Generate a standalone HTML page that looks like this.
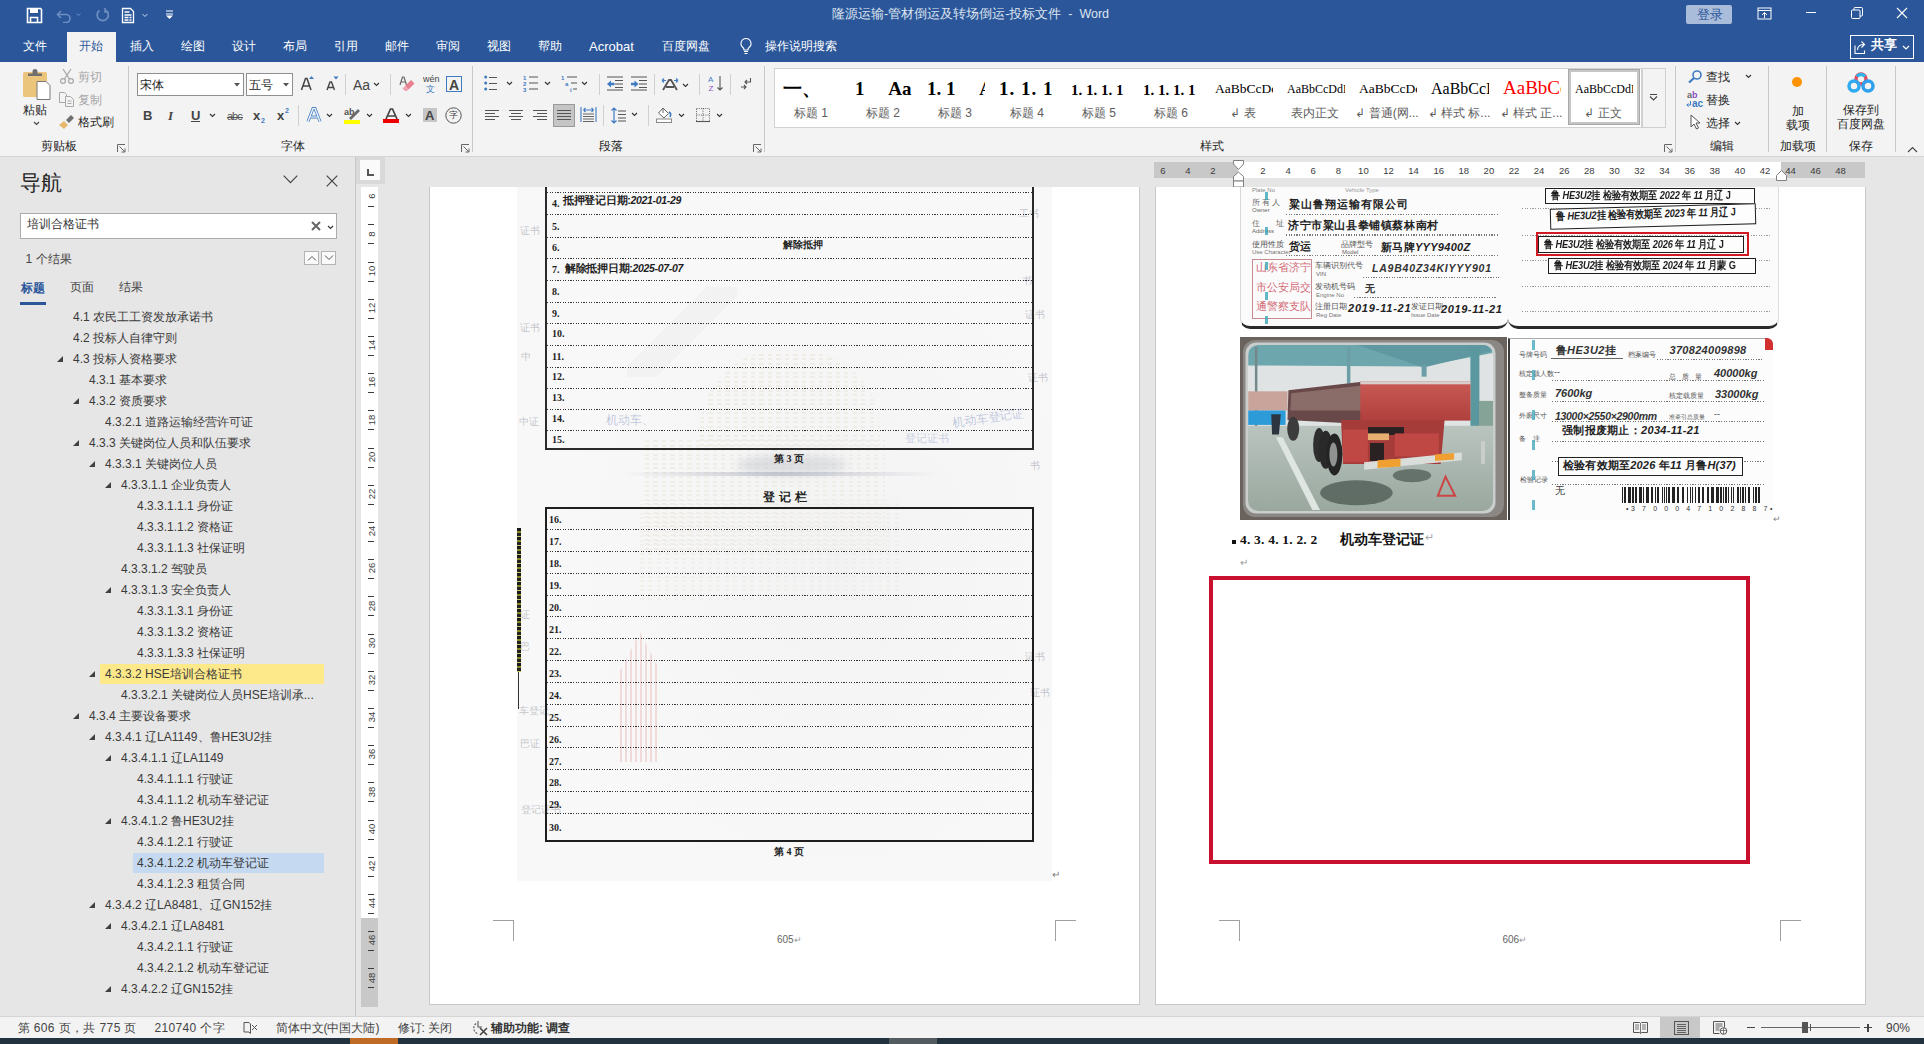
<!DOCTYPE html>
<html><head><meta charset="utf-8">
<style>
*{margin:0;padding:0;box-sizing:border-box}
html,body{width:1924px;height:1044px;overflow:hidden;background:#e6e6e6;font-family:"Liberation Sans",sans-serif;color:#262626}
.a{position:absolute}
#title{position:absolute;left:0;top:0;width:1924px;height:62px;background:#2b579a}
#ribbon{position:absolute;left:0;top:62px;width:1924px;height:95px;background:#f3f3f3;border-bottom:1px solid #d5d5d5}
#nav{position:absolute;left:0;top:157px;width:356px;height:859px;background:#e6e6e6;border-right:1px solid #c6c6c6}
#doc{position:absolute;left:356px;top:157px;width:1568px;height:859px;background:#e6e6e6}
#status{position:absolute;left:0;top:1016px;width:1924px;height:22px;background:#f3f3f3;border-top:1px solid #d4d4d4}
#task{position:absolute;left:0;top:1038px;width:1924px;height:6px;background:#22333f}
.page{position:absolute;background:#fff;border:1px solid #c8c8c8}
.t{position:absolute;white-space:nowrap;line-height:1}
</style></head><body>
<div id="title">
<svg class="a" style="left:26px;top:7px" width="17" height="17" viewBox="0 0 17 17"><path d="M1.5 1.5h13l1 1v13h-14z" fill="none" stroke="#fff" stroke-width="1.6"/><rect x="4" y="2" width="8" height="4" fill="#fff"/><path d="M4.5 15.5v-5h7v5" fill="none" stroke="#fff" stroke-width="1.6"/></svg>
<svg class="a" style="left:56px;top:8px" width="30" height="15" viewBox="0 0 30 15"><path d="M2 6.5h8a4 4 0 0 1 0 8H7" fill="none" stroke="#6c8ec2" stroke-width="1.6"/><path d="M5 3L1.5 6.5 5 10" fill="none" stroke="#6c8ec2" stroke-width="1.6"/><path d="M20.5 5.5l2 2 2-2" fill="none" stroke="#6c8ec2" stroke-width="1"/></svg>
<svg class="a" style="left:95px;top:7px" width="16" height="16" viewBox="0 0 16 16"><path d="M10.5 3.2A5.6 5.6 0 1 1 4.5 3.5" fill="none" stroke="#6c8ec2" stroke-width="1.7"/><path d="M10 1v4h3.6" fill="none" stroke="#6c8ec2" stroke-width="1.6"/></svg>
<svg class="a" style="left:121px;top:7px" width="32" height="17" viewBox="0 0 32 17"><path d="M1.5 1.5h8l3 3v11h-11z" fill="none" stroke="#fff" stroke-width="1.3"/><path d="M3.5 5h5M3.5 8h7M3.5 10.5h4M8.5 10.5h2M3.5 13h4M8.5 13h2" stroke="#fff" stroke-width="1.3"/><path d="M21.5 7l2.5 2.5 2.5-2.5" fill="none" stroke="#c9d6ea" stroke-width="1"/></svg>
<svg class="a" style="left:165px;top:10px" width="9" height="10" viewBox="0 0 9 10"><path d="M1 1h7M1 4h7" stroke="#fff" stroke-width="1.2"/><path d="M1 5.5h7L4.5 9z" fill="#fff"/></svg>
<div class="t" style="left:832px;top:7.5px;font-size:12.5px;color:#dde4ef">隆源运输-管材倒运及转场倒运-投标文件&nbsp;&nbsp;-&nbsp;&nbsp;Word</div>
<div class="a" style="left:1686px;top:5px;width:46px;height:19px;background:#a9bcda;border-radius:2px"></div>
<div class="t" style="left:1697px;top:8px;font-size:13px;color:#2b579a">登录</div>
<svg class="a" style="left:1757px;top:7px" width="15" height="13" viewBox="0 0 15 13"><rect x="1" y="1" width="13" height="11" fill="none" stroke="#fff" stroke-width="1"/><path d="M1 3.5h13" stroke="#fff"/><path d="M7.5 11V5.5M5 8l2.5-2.5L10 8" fill="none" stroke="#fff"/></svg>
<div class="a" style="left:1806px;top:12px;width:10px;height:1px;background:#fff"></div>
<svg class="a" style="left:1851px;top:7px" width="12" height="12" viewBox="0 0 12 12"><rect x="0.5" y="3" width="8.5" height="8.5" rx="1" fill="none" stroke="#fff"/><path d="M3 3V1.5a1 1 0 0 1 1-1h6.5a1 1 0 0 1 1 1V8a1 1 0 0 1-1 1H9" fill="none" stroke="#fff"/></svg>
<svg class="a" style="left:1896px;top:7px" width="12" height="12" viewBox="0 0 12 12"><path d="M1 1l10 10M11 1L1 11" stroke="#fff" stroke-width="1.1"/></svg>
<div class="a" style="left:67px;top:32px;width:49px;height:30px;background:#f3f3f3"></div>
<div class="t" style="left:23px;top:40px;font-size:12px;color:#fff">文件</div>
<div class="t" style="left:79px;top:40px;font-size:12px;color:#2b579a">开始</div>
<div class="t" style="left:130px;top:40px;font-size:12px;color:#fff">插入</div>
<div class="t" style="left:181px;top:40px;font-size:12px;color:#fff">绘图</div>
<div class="t" style="left:232px;top:40px;font-size:12px;color:#fff">设计</div>
<div class="t" style="left:283px;top:40px;font-size:12px;color:#fff">布局</div>
<div class="t" style="left:334px;top:40px;font-size:12px;color:#fff">引用</div>
<div class="t" style="left:385px;top:40px;font-size:12px;color:#fff">邮件</div>
<div class="t" style="left:436px;top:40px;font-size:12px;color:#fff">审阅</div>
<div class="t" style="left:487px;top:40px;font-size:12px;color:#fff">视图</div>
<div class="t" style="left:538px;top:40px;font-size:12px;color:#fff">帮助</div>
<div class="t" style="left:589px;top:40px;font-size:13px;color:#fff">Acrobat</div>
<div class="t" style="left:662px;top:40px;font-size:12px;color:#fff">百度网盘</div>
<svg class="a" style="left:739px;top:37px" width="14" height="18" viewBox="0 0 14 18"><path d="M7 1.5a5 5 0 0 0-3 9c.8.7 1 1.3 1 2.5h4c0-1.2.2-1.8 1-2.5a5 5 0 0 0-3-9z" fill="none" stroke="#fff" stroke-width="1.1"/><path d="M5 14.5h4M5.5 16.5h3" stroke="#fff" stroke-width="1.1"/></svg>
<div class="t" style="left:765px;top:40px;font-size:12px;color:#fff">操作说明搜索</div>
<div class="a" style="left:1850px;top:35px;width:64px;height:24px;border:1px solid #fff"></div>
<svg class="a" style="left:1854px;top:40px" width="14" height="14" viewBox="0 0 14 14"><path d="M1 5.5v8h9.5v-3" fill="none" stroke="#fff" stroke-width="1.1"/><path d="M3.5 10c0-4 3-5.5 6.5-5.5M7.5 1.5l3 3-3 3" fill="none" stroke="#fff" stroke-width="1.1"/></svg>
<div class="t" style="left:1871px;top:38px;font-size:13px;color:#fff;font-weight:bold">共享</div>
<svg class="a" style="left:1902px;top:45px" width="8" height="6" viewBox="0 0 8 6"><path d="M1 1l3 3 3-3" fill="none" stroke="#fff" stroke-width="1.2"/></svg>
</div>
<div id="ribbon">
<!-- clipboard -->
<svg class="a" style="left:22px;top:7px" width="30" height="32" viewBox="0 0 30 32"><rect x="1" y="3" width="24" height="25" rx="1.5" fill="#ebc57b"/><path d="M6 7h14V4.5h-4.5V2.5a2.5 2.5 0 0 0-5 0v2H6z" fill="#6f6f6f"/><path d="M15 12.5h9l4 4v14h-13z" fill="#fff" stroke="#7a7a7a" stroke-width="1"/></svg>
<div class="t" style="left:23px;top:42px;font-size:12px;color:#262626">粘贴</div>
<svg class="a" style="left:33px;top:59px" width="7" height="5" viewBox="0 0 7 5"><path d="M1 1l2.5 2.5L6 1" fill="none" stroke="#444" stroke-width="1.1"/></svg>
<svg class="a" style="left:59px;top:6px" width="16" height="16" viewBox="0 0 16 16"><path d="M4 1l6.5 10M12 1L5.5 11" stroke="#a8a8a8" stroke-width="1.3"/><circle cx="4" cy="13" r="2.4" fill="none" stroke="#a8a8a8" stroke-width="1.2"/><circle cx="12" cy="13" r="2.4" fill="none" stroke="#a8a8a8" stroke-width="1.2"/></svg>
<div class="t" style="left:78px;top:9px;font-size:12px;color:#a6a6a6">剪切</div>
<svg class="a" style="left:58px;top:29px" width="17" height="16" viewBox="0 0 17 16"><path d="M1.5 1.5h5l2 2v8h-7z" fill="none" stroke="#a8a8a8" stroke-width="1"/><path d="M7.5 5.5h5l3 3v7h-8z" fill="#f3f3f3" stroke="#a8a8a8" stroke-width="1"/><path d="M9.5 10h4M9.5 12.5h4" stroke="#a8a8a8"/></svg>
<div class="t" style="left:78px;top:32px;font-size:12px;color:#a6a6a6">复制</div>
<svg class="a" style="left:58px;top:52px" width="18" height="16" viewBox="0 0 18 16"><path d="M1 11l5-4 4 4-4 4z" fill="#e8b86a"/><path d="M8 6l5-5 3 3-5 5z" fill="#6f6f6f"/></svg>
<div class="t" style="left:78px;top:54px;font-size:12px;color:#262626">格式刷</div>
<div class="t" style="left:41px;top:78px;font-size:12px;color:#262626">剪贴板</div>
<svg class="a" style="left:117px;top:82px" width="9" height="9" viewBox="0 0 9 9"><path d="M.5 8V.5H8" fill="none" stroke="#666"/><path d="M2.5 2.5l5.5 5.5M8 4.5v3.5H4.5" fill="none" stroke="#666"/></svg>
<div class="a" style="left:128px;top:4px;width:1px;height:86px;background:#c8c8c8"></div>
<!-- font -->
<div class="a" style="left:137px;top:11px;width:107px;height:23px;background:#fff;border:1px solid #8f8f8f"></div>
<div class="t" style="left:140px;top:17px;font-size:12px;color:#222">宋体</div>
<svg class="a" style="left:234px;top:21px" width="6" height="4"><path d="M0 0h6L3 3.5z" fill="#555"/></svg>
<div class="a" style="left:246px;top:11px;width:47px;height:23px;background:#fff;border:1px solid #8f8f8f"></div>
<div class="t" style="left:249px;top:17px;font-size:12px;color:#222">五号</div>
<svg class="a" style="left:283px;top:21px" width="6" height="4"><path d="M0 0h6L3 3.5z" fill="#555"/></svg>
<svg class="a" style="left:300px;top:13px" width="16" height="16" viewBox="0 0 16 16"><path d="M1.5 15L5.5 3.5h1.5L11 15M3 11h7" fill="none" stroke="#444" stroke-width="1.5"/><path d="M9 4l2.5-3 2.5 3z" fill="#3f7bc1"/></svg>
<svg class="a" style="left:325px;top:13px" width="16" height="16" viewBox="0 0 16 16"><path d="M2 15L5 7h1.5L9.5 15M3.5 12.5h5" fill="none" stroke="#444" stroke-width="1.4"/><path d="M8.5 1.5h5L11 4.5z" fill="#3f7bc1"/></svg>
<div class="a" style="left:345px;top:12px;width:1px;height:21px;background:#d0d0d0"></div>
<div class="t" style="left:353px;top:16px;font-size:14px;color:#444">Aa</div>
<svg class="a" style="left:373px;top:20px" width="7" height="5" viewBox="0 0 7 5"><path d="M1 1l2.5 2.5L6 1" fill="none" stroke="#333" stroke-width="1.1"/></svg>
<div class="a" style="left:390px;top:12px;width:1px;height:21px;background:#d0d0d0"></div>
<svg class="a" style="left:399px;top:13px" width="16" height="17" viewBox="0 0 16 17"><path d="M1 10L3.5 2h1.5L7.5 10M2 7h4" fill="none" stroke="#666" stroke-width="1.2"/><path d="M6 11l6-6 3.5 3.5-6 6z" fill="#e8808f"/><path d="M3.5 13.5l2.5-2.5 3.5 3.5-1.5 1.5h-2z" fill="#f0a3ae"/></svg>
<div class="t" style="left:423px;top:13px;font-size:9px;color:#444">wén</div>
<div class="t" style="left:426px;top:23px;font-size:9px;color:#3f7bc1">文</div>
<div class="a" style="left:446px;top:14px;width:16px;height:16px;border:1.5px solid #3f7bc1"></div>
<div class="t" style="left:449px;top:16px;font-size:14px;color:#444;font-weight:bold">A</div>
<div class="t" style="left:143px;top:47px;font-size:13px;color:#444;font-weight:bold">B</div>
<div class="t" style="left:168px;top:47px;font-size:13px;color:#444;font-style:italic;font-weight:bold;font-family:'Liberation Serif',serif">I</div>
<div class="t" style="left:191px;top:47px;font-size:13px;color:#444;font-weight:bold">U</div>
<div class="a" style="left:191px;top:59px;width:9px;height:1px;background:#444"></div>
<svg class="a" style="left:209px;top:51px" width="7" height="5" viewBox="0 0 7 5"><path d="M1 1l2.5 2.5L6 1" fill="none" stroke="#333" stroke-width="1.1"/></svg>
<div class="t" style="left:227px;top:49px;font-size:11px;color:#555;letter-spacing:-1px">abc</div>
<div class="a" style="left:227px;top:55px;width:16px;height:1px;background:#555"></div>
<div class="t" style="left:253px;top:47px;font-size:13px;color:#444;font-weight:bold">x</div>
<div class="t" style="left:261px;top:55px;font-size:7px;color:#3f7bc1;font-weight:bold">2</div>
<div class="t" style="left:277px;top:47px;font-size:13px;color:#444;font-weight:bold">x</div>
<div class="t" style="left:285px;top:45px;font-size:7px;color:#3f7bc1;font-weight:bold">2</div>
<div class="a" style="left:298px;top:43px;width:1px;height:21px;background:#d0d0d0"></div>
<svg class="a" style="left:306px;top:45px" width="16" height="16" viewBox="0 0 16 16"><path d="M2 14.5L7 1.5h2L14 14.5M4.5 10h7" fill="none" stroke="#4f86c6" stroke-width="3"/><path d="M2 14.5L7 1.5h2L14 14.5M4.5 10h7" fill="none" stroke="#fff" stroke-width="1.2"/></svg>
<svg class="a" style="left:326px;top:51px" width="7" height="5" viewBox="0 0 7 5"><path d="M1 1l2.5 2.5L6 1" fill="none" stroke="#333" stroke-width="1.1"/></svg>
<svg class="a" style="left:344px;top:44px" width="17" height="18" viewBox="0 0 17 18"><text x="0" y="9" font-size="9" font-family="Liberation Sans" font-weight="bold" fill="#555">ab</text><path d="M5 12l9-9 2 2-9 9z" fill="#6a6a6a"/><rect x="0" y="14" width="16" height="4" fill="#ffff00"/></svg>
<svg class="a" style="left:366px;top:51px" width="7" height="5" viewBox="0 0 7 5"><path d="M1 1l2.5 2.5L6 1" fill="none" stroke="#333" stroke-width="1.1"/></svg>
<svg class="a" style="left:383px;top:46px" width="17" height="15" viewBox="0 0 17 15"><path d="M3 11L7.5 1h2L14 11M5 8h7" fill="none" stroke="#444" stroke-width="1.7"/><rect x="0" y="11" width="16" height="4" fill="#e00"/></svg>
<svg class="a" style="left:405px;top:51px" width="7" height="5" viewBox="0 0 7 5"><path d="M1 1l2.5 2.5L6 1" fill="none" stroke="#333" stroke-width="1.1"/></svg>
<div class="a" style="left:423px;top:46px;width:14px;height:14px;background:#c6c6c6"></div>
<div class="t" style="left:425px;top:47px;font-size:13px;color:#444;font-weight:bold">A</div>
<svg class="a" style="left:445px;top:45px" width="17" height="17" viewBox="0 0 17 17"><circle cx="8.5" cy="8.5" r="7.7" fill="none" stroke="#555" stroke-width="1"/></svg>
<div class="t" style="left:449px;top:49px;font-size:9px;color:#444">字</div>
<div class="t" style="left:281px;top:78px;font-size:12px;color:#262626">字体</div>
<svg class="a" style="left:461px;top:82px" width="9" height="9" viewBox="0 0 9 9"><path d="M.5 8V.5H8" fill="none" stroke="#666"/><path d="M2.5 2.5l5.5 5.5M8 4.5v3.5H4.5" fill="none" stroke="#666"/></svg>
<div class="a" style="left:472px;top:4px;width:1px;height:86px;background:#c8c8c8"></div>
<!-- paragraph -->
<svg class="a" style="left:484px;top:13px" width="30" height="16" viewBox="0 0 30 16"><circle cx="1.7" cy="2" r="1.5" fill="#3f7bc1"/><circle cx="1.7" cy="8" r="1.5" fill="#3f7bc1"/><circle cx="1.7" cy="14" r="1.5" fill="#3f7bc1"/><path d="M5 2.5h8M5 8.5h8M5 14.5h8" stroke="#555" stroke-width="1"/><path d="M23 7l2.5 2.5L28 7" fill="none" stroke="#333" stroke-width="1.1"/></svg>
<svg class="a" style="left:523px;top:13px" width="30" height="18" viewBox="0 0 30 18"><text x="0" y="5" font-size="6" font-weight="bold" font-family="Liberation Sans" fill="#3f7bc1">1</text><text x="0" y="11" font-size="6" font-weight="bold" font-family="Liberation Sans" fill="#3f7bc1">2</text><text x="0" y="17" font-size="6" font-weight="bold" font-family="Liberation Sans" fill="#3f7bc1">3</text><path d="M6 2h9M6 8h9M6 14h9" stroke="#555" stroke-width="1.1"/><path d="M22 7l2.5 2.5L27 7" fill="none" stroke="#333" stroke-width="1.1"/></svg>
<svg class="a" style="left:561px;top:13px" width="30" height="18" viewBox="0 0 30 18"><text x="0" y="5" font-size="6" font-weight="bold" font-family="Liberation Sans" fill="#3f7bc1">1</text><text x="4" y="11" font-size="6" font-weight="bold" font-family="Liberation Sans" fill="#3f7bc1">a</text><text x="9" y="17" font-size="6" font-weight="bold" font-family="Liberation Sans" fill="#3f7bc1">i</text><path d="M6 2h10M10 8h6M12 14h4" stroke="#555" stroke-width="1.1"/><path d="M21 7l2.5 2.5L26 7" fill="none" stroke="#333" stroke-width="1.1"/></svg>
<div class="a" style="left:599px;top:12px;width:1px;height:21px;background:#d0d0d0"></div>
<svg class="a" style="left:607px;top:14px" width="17" height="15" viewBox="0 0 17 15"><path d="M0 1h16M8 4.5h8M8 8h8M8 11.5h8M0 14h16" stroke="#555" stroke-width="1.1"/><path d="M0 8l4-3.5v2.3h3.5v2.4H4v2.3z" fill="#3f7bc1"/></svg>
<svg class="a" style="left:631px;top:14px" width="17" height="15" viewBox="0 0 17 15"><path d="M0 1h16M8 4.5h8M8 8h8M8 11.5h8M0 14h16" stroke="#555" stroke-width="1.1"/><path d="M7.5 8L3.5 4.5v2.3H0v2.4h3.5v2.3z" fill="#3f7bc1"/></svg>
<div class="a" style="left:654px;top:12px;width:1px;height:21px;background:#d0d0d0"></div>
<svg class="a" style="left:661px;top:15px" width="30" height="14" viewBox="0 0 30 14"><path d="M2 13l6-10h2l6 10M5 10h8" fill="none" stroke="#555" stroke-width="1.8"/><path d="M1 3.5h4M1 3.5l2-2M1 3.5l2 2M13 3.5h4M17 3.5l-2-2M17 3.5l-2 2" fill="none" stroke="#3f7bc1" stroke-width="1.1"/><path d="M22 7l2.5 2.5L27 7" fill="none" stroke="#333" stroke-width="1.1"/></svg>
<div class="a" style="left:699px;top:12px;width:1px;height:21px;background:#d0d0d0"></div>
<svg class="a" style="left:708px;top:13px" width="16" height="17" viewBox="0 0 16 17"><text x="0" y="7" font-size="8" font-family="Liberation Sans" fill="#3f7bc1">A</text><text x="0.5" y="16" font-size="8" font-family="Liberation Sans" fill="#8d4fbf">Z</text><path d="M12 1v14M9.5 12.5L12 15l2.5-2.5" fill="none" stroke="#555" stroke-width="1.1"/></svg>
<div class="a" style="left:730px;top:12px;width:1px;height:21px;background:#d0d0d0"></div>
<svg class="a" style="left:740px;top:15px" width="13" height="13" viewBox="0 0 13 13"><path d="M10.5 1v4H5M7 3L5 5l2 2M1 10h5M4 8l2 2-2 2" fill="none" stroke="#555" stroke-width="1.1"/></svg>
<svg class="a" style="left:485px;top:48px" width="15" height="12" viewBox="0 0 15 12"><path d="M0 .5h14M0 3.5h10M0 6.5h14M0 9.5h10" stroke="#555" stroke-width="1"/></svg>
<svg class="a" style="left:509px;top:48px" width="15" height="12" viewBox="0 0 15 12"><path d="M0 .5h14M2 3.5h10M0 6.5h14M2 9.5h10" stroke="#555" stroke-width="1"/></svg>
<svg class="a" style="left:533px;top:48px" width="15" height="12" viewBox="0 0 15 12"><path d="M0 .5h14M4 3.5h10M0 6.5h14M4 9.5h10" stroke="#555" stroke-width="1"/></svg>
<div class="a" style="left:553px;top:42px;width:22px;height:23px;background:#c5c5c5;border:1px solid #9a9a9a"></div>
<svg class="a" style="left:557px;top:48px" width="15" height="12" viewBox="0 0 15 12"><path d="M0 .5h14M0 3.5h14M0 6.5h14M0 9.5h14" stroke="#555" stroke-width="1"/></svg>
<svg class="a" style="left:580px;top:45px" width="17" height="16" viewBox="0 0 17 16"><path d="M1 0v15M16 0v15" stroke="#3f7bc1" stroke-width="1.1"/><path d="M3.5 3h10M3.5 3l2-2M3.5 3l2 2M13.5 3l-2-2M13.5 3l-2 2" fill="none" stroke="#3f7bc1" stroke-width="1.1"/><path d="M3 7h11M3 9.5h11M3 12h11M3 14.5h11" stroke="#555" stroke-width=".9"/></svg>
<div class="a" style="left:603px;top:43px;width:1px;height:21px;background:#d0d0d0"></div>
<svg class="a" style="left:611px;top:45px" width="28" height="17" viewBox="0 0 28 17"><path d="M3 1v15M.5 3.5L3 1l2.5 2.5M.5 13.5L3 16l2.5-2.5" fill="none" stroke="#3f7bc1" stroke-width="1.2"/><path d="M7 4h8M7 7.5h8M7 11h8M7 14h8" stroke="#555" stroke-width="1.1"/><path d="M21 6l2.5 2.5L26 6" fill="none" stroke="#333" stroke-width="1.1"/></svg>
<div class="a" style="left:648px;top:43px;width:1px;height:21px;background:#d0d0d0"></div>
<svg class="a" style="left:656px;top:44px" width="30" height="18" viewBox="0 0 30 18"><path d="M7 2l5.5 5.5L8 12 2.5 7z" fill="#fff" stroke="#666" stroke-width="1"/><path d="M7 2V7" stroke="#666"/><path d="M13 6c2 1 2 3 1 5" fill="none" stroke="#3f7bc1" stroke-width="1.6"/><rect x="0.5" y="13" width="15" height="3.5" fill="#fff" stroke="#888"/><path d="M23 8l2.5 2.5L28 8" fill="none" stroke="#333" stroke-width="1.1"/></svg>
<svg class="a" style="left:696px;top:46px" width="30" height="15" viewBox="0 0 30 15"><path d="M.5 .5h13v13h-13zM7 .5v13M.5 7h13" fill="none" stroke="#666" stroke-width="1" stroke-dasharray="1 1.2"/><path d="M0 13.5h14" stroke="#555" stroke-width="1.1"/><path d="M21 6l2.5 2.5L26 6" fill="none" stroke="#333" stroke-width="1.1"/></svg>
<div class="t" style="left:599px;top:78px;font-size:12px;color:#262626">段落</div>
<svg class="a" style="left:753px;top:82px" width="9" height="9" viewBox="0 0 9 9"><path d="M.5 8V.5H8" fill="none" stroke="#666"/><path d="M2.5 2.5l5.5 5.5M8 4.5v3.5H4.5" fill="none" stroke="#666"/></svg>
<div class="a" style="left:764px;top:4px;width:1px;height:86px;background:#c8c8c8"></div>
<!-- styles -->
<div class="a" style="left:774px;top:6px;width:868px;height:60px;background:#fff;border:1px solid #d2d2d2"></div>
<div class="a" style="left:783px;top:0;width:58px;height:60px;overflow:hidden"><div class="t" style="left:0;font-family:'Liberation Serif',serif;font-size:19px;font-weight:bold;top:17px;color:#000">一、</div></div>
<div class="t" style="left:775px;top:45px;width:72px;text-align:center;font-size:12px;color:#5c5c5c">标题 1</div>
<div class="a" style="left:855px;top:0;width:58px;height:60px;overflow:hidden"><div class="t" style="left:0;font-family:'Liberation Serif',serif;font-size:19px;font-weight:bold;top:17px;color:#000">1&nbsp;&nbsp;&nbsp;&nbsp;&nbsp;Aa</div></div>
<div class="t" style="left:847px;top:45px;width:72px;text-align:center;font-size:12px;color:#5c5c5c">标题 2</div>
<div class="a" style="left:927px;top:0;width:58px;height:60px;overflow:hidden"><div class="t" style="left:0;font-family:'Liberation Serif',serif;font-size:19px;font-weight:bold;top:17px;color:#000">1.&nbsp;1&nbsp;&nbsp;&nbsp;&nbsp;&nbsp;A</div></div>
<div class="t" style="left:919px;top:45px;width:72px;text-align:center;font-size:12px;color:#5c5c5c">标题 3</div>
<div class="a" style="left:999px;top:0;width:58px;height:60px;overflow:hidden"><div class="t" style="left:0;font-family:'Liberation Serif',serif;font-size:19px;font-weight:bold;top:17px;letter-spacing:1px;color:#000">1.&nbsp;1.&nbsp;1</div></div>
<div class="t" style="left:991px;top:45px;width:72px;text-align:center;font-size:12px;color:#5c5c5c">标题 4</div>
<div class="a" style="left:1071px;top:0;width:58px;height:60px;overflow:hidden"><div class="t" style="left:0;font-family:'Liberation Serif',serif;font-size:15px;font-weight:bold;top:21px;color:#000">1.&nbsp;1.&nbsp;1.&nbsp;1</div></div>
<div class="t" style="left:1063px;top:45px;width:72px;text-align:center;font-size:12px;color:#5c5c5c">标题 5</div>
<div class="a" style="left:1143px;top:0;width:58px;height:60px;overflow:hidden"><div class="t" style="left:0;font-family:'Liberation Serif',serif;font-size:15px;font-weight:bold;top:21px;color:#000">1.&nbsp;1.&nbsp;1.&nbsp;1</div></div>
<div class="t" style="left:1135px;top:45px;width:72px;text-align:center;font-size:12px;color:#5c5c5c">标题 6</div>
<div class="a" style="left:1215px;top:0;width:58px;height:60px;overflow:hidden"><div class="t" style="left:0;font-family:'Liberation Serif',serif;font-size:13.5px;top:20px;color:#000">AaBbCcDdEe</div></div>
<div class="t" style="left:1207px;top:45px;width:72px;text-align:center;font-size:12px;color:#5c5c5c">↲ 表</div>
<div class="a" style="left:1287px;top:0;width:58px;height:60px;overflow:hidden"><div class="t" style="left:0;font-family:'Liberation Serif',serif;font-size:12px;top:21px;color:#000">AaBbCcDdEe</div></div>
<div class="t" style="left:1279px;top:45px;width:72px;text-align:center;font-size:12px;color:#5c5c5c">表内正文</div>
<div class="a" style="left:1359px;top:0;width:58px;height:60px;overflow:hidden"><div class="t" style="left:0;font-family:'Liberation Serif',serif;font-size:13.5px;top:20px;color:#000">AaBbCcDdEe</div></div>
<div class="t" style="left:1351px;top:45px;width:72px;text-align:center;font-size:12px;color:#5c5c5c">↲ 普通(网...</div>
<div class="a" style="left:1431px;top:0;width:58px;height:60px;overflow:hidden"><div class="t" style="left:0;font-family:'Liberation Serif',serif;font-size:16px;top:19px;color:#000">AaBbCcI</div></div>
<div class="t" style="left:1423px;top:45px;width:72px;text-align:center;font-size:12px;color:#5c5c5c">↲ 样式 标...</div>
<div class="a" style="left:1503px;top:0;width:58px;height:60px;overflow:hidden"><div class="t" style="left:0;font-family:'Liberation Serif',serif;font-size:19px;top:16px;color:#f00;color:#f00">AaBbCc</div></div>
<div class="t" style="left:1495px;top:45px;width:72px;text-align:center;font-size:12px;color:#5c5c5c">↲ 样式 正...</div>
<div class="a" style="left:1568px;top:7px;width:72px;height:56px;border:3px solid #c6c6c6;outline:1px solid #a9a9a9;outline-offset:-1px"></div>
<div class="a" style="left:1575px;top:0;width:58px;height:60px;overflow:hidden"><div class="t" style="left:0;font-family:'Liberation Serif',serif;font-size:12px;top:21px;color:#000">AaBbCcDdEe</div></div>
<div class="t" style="left:1567px;top:45px;width:72px;text-align:center;font-size:12px;color:#5c5c5c">↲ 正文</div>
<div class="a" style="left:1642px;top:6px;width:24px;height:60px;background:#f3f3f3;border:1px solid #cfcfcf"></div>
<svg class="a" style="left:1649px;top:32px" width="9" height="7" viewBox="0 0 9 7"><path d="M1 .5h7" stroke="#444"/><path d="M1 2.5l3.5 3.5L8 2.5" fill="none" stroke="#444" stroke-width="1.1"/></svg>
<div class="t" style="left:1200px;top:78px;font-size:12px;color:#262626">样式</div>
<svg class="a" style="left:1664px;top:82px" width="9" height="9" viewBox="0 0 9 9"><path d="M.5 8V.5H8" fill="none" stroke="#666"/><path d="M2.5 2.5l5.5 5.5M8 4.5v3.5H4.5" fill="none" stroke="#666"/></svg>
<div class="a" style="left:1675px;top:4px;width:1px;height:86px;background:#c8c8c8"></div>
<svg class="a" style="left:1688px;top:8px" width="14" height="13" viewBox="0 0 14 13"><circle cx="9" cy="5" r="4" fill="none" stroke="#3f7bc1" stroke-width="1.6"/><path d="M6 8l-5 4.5" stroke="#3f7bc1" stroke-width="2.2"/></svg>
<div class="t" style="left:1706px;top:9px;font-size:12px;color:#262626">查找</div>
<svg class="a" style="left:1745px;top:12px" width="7" height="5" viewBox="0 0 7 5"><path d="M1 1l2.5 2.5L6 1" fill="none" stroke="#333" stroke-width="1.1"/></svg>
<div class="t" style="left:1687px;top:29px;font-size:9px;color:#666;font-weight:bold">a<span style="color:#8d4fbf">b</span></div>
<div class="t" style="left:1692px;top:37px;font-size:10px;color:#3f7bc1;font-weight:bold">ac</div>
<svg class="a" style="left:1686px;top:39px" width="6" height="7" viewBox="0 0 6 7"><path d="M4.5 0v4H1M2.5 2.5L.8 4l1.7 1.5" fill="none" stroke="#3f7bc1" stroke-width="1"/></svg>
<div class="t" style="left:1706px;top:32px;font-size:12px;color:#262626">替换</div>
<svg class="a" style="left:1690px;top:52px" width="11" height="16" viewBox="0 0 11 16"><path d="M1 1v12l3-3 2.5 5 2-1-2.5-5H10z" fill="#fff" stroke="#555" stroke-width="1"/></svg>
<div class="t" style="left:1706px;top:55px;font-size:12px;color:#262626">选择</div>
<svg class="a" style="left:1734px;top:59px" width="7" height="5" viewBox="0 0 7 5"><path d="M1 1l2.5 2.5L6 1" fill="none" stroke="#333" stroke-width="1.1"/></svg>
<div class="t" style="left:1710px;top:78px;font-size:12px;color:#262626">编辑</div>
<div class="a" style="left:1768px;top:4px;width:1px;height:86px;background:#c8c8c8"></div>
<div class="a" style="left:1792px;top:15px;width:10px;height:10px;border-radius:50%;background:#ff9200"></div>
<div class="t" style="left:1792px;top:43px;font-size:12px;color:#262626">加</div>
<div class="t" style="left:1786px;top:57px;font-size:12px;color:#262626">载项</div>
<div class="t" style="left:1780px;top:78px;font-size:12px;color:#262626">加载项</div>
<div class="a" style="left:1826px;top:4px;width:1px;height:86px;background:#c8c8c8"></div>
<svg class="a" style="left:1847px;top:10px" width="28" height="22" viewBox="0 0 28 22"><circle cx="14" cy="7" r="5" fill="none" stroke="#e8485b" stroke-width="3.5"/><path d="M10 4.5A5 5 0 0 1 18 4.5" fill="none" stroke="#2fb5ee" stroke-width="3.5"/><circle cx="7" cy="14" r="5" fill="none" stroke="#2fa9f0" stroke-width="3.5"/><circle cx="21" cy="14" r="5" fill="none" stroke="#2fa0ee" stroke-width="3.5"/></svg>
<div class="t" style="left:1843px;top:42px;font-size:12px;color:#262626">保存到</div>
<div class="t" style="left:1837px;top:56px;font-size:12px;color:#262626">百度网盘</div>
<div class="t" style="left:1849px;top:78px;font-size:12px;color:#262626">保存</div>
<div class="a" style="left:1895px;top:4px;width:1px;height:86px;background:#c8c8c8"></div>
<svg class="a" style="left:1907px;top:84px" width="11" height="7" viewBox="0 0 11 7"><path d="M1 6l4.5-4.5L10 6" fill="none" stroke="#444" stroke-width="1.1"/></svg>
</div>

<div id="nav">
<div class="t" style="left:20px;top:16px;font-size:20.5px;color:#262626">导航</div>
<svg class="a" style="left:283px;top:18px" width="15" height="9" viewBox="0 0 15 9"><path d="M.7 .7l6.8 7 6.8-7" fill="none" stroke="#444" stroke-width="1.2"/></svg>
<svg class="a" style="left:326px;top:18px" width="12" height="12" viewBox="0 0 12 12"><path d="M.7 .7l10.6 10.6M11.3 .7L.7 11.3" stroke="#444" stroke-width="1.2"/></svg>
<div class="a" style="left:20px;top:56px;width:317px;height:26px;background:#fff;border:1px solid #ababab"></div>
<div class="t" style="left:27px;top:61px;font-size:12px;color:#333">培训合格证书</div>
<svg class="a" style="left:311px;top:64px" width="10" height="10" viewBox="0 0 10 10"><path d="M1 1l8 8M9 1L1 9" stroke="#666" stroke-width="2"/></svg>
<svg class="a" style="left:327px;top:68px" width="7" height="5" viewBox="0 0 7 5"><path d="M1 1l2.5 2.5L6 1" fill="none" stroke="#333" stroke-width="1.1"/></svg>
<div class="t" style="left:25.5px;top:96px;font-size:12px;color:#444">1 个结果</div>
<div class="a" style="left:304px;top:94px;width:15px;height:14px;border:1px solid #b4b4b4;background:#fafafa"></div>
<div class="a" style="left:321px;top:94px;width:15px;height:14px;border:1px solid #b4b4b4;background:#fafafa"></div>
<svg class="a" style="left:307px;top:98px" width="10" height="6" viewBox="0 0 10 6"><path d="M1 5.5l4-4 4 4" fill="none" stroke="#555" stroke-width="1"/></svg>
<svg class="a" style="left:324px;top:98px" width="10" height="6" viewBox="0 0 10 6"><path d="M1 .5l4 4 4-4" fill="none" stroke="#555" stroke-width="1"/></svg>
<div class="t" style="left:21px;top:124.5px;font-size:12px;color:#2b579a;font-weight:bold">标题</div>
<div class="a" style="left:20px;top:145px;width:26px;height:3px;background:#2b579a"></div>
<div class="t" style="left:70px;top:124px;font-size:12px;color:#444">页面</div>
<div class="t" style="left:119px;top:124px;font-size:12px;color:#444">结果</div>
<div class="t" style="left:73px;top:154px;font-size:12px;color:#3a3a3a">4.1 农民工工资发放承诺书</div>
<div class="t" style="left:73px;top:175px;font-size:12px;color:#3a3a3a">4.2 投标人自律守则</div>
<svg class="a" style="left:57px;top:199px" width="6" height="6" viewBox="0 0 6 6"><path d="M6 0v6H0z" fill="#404040"/></svg>
<div class="t" style="left:73px;top:196px;font-size:12px;color:#3a3a3a">4.3 投标人资格要求</div>
<div class="t" style="left:89px;top:217px;font-size:12px;color:#3a3a3a">4.3.1 基本要求</div>
<svg class="a" style="left:73px;top:241px" width="6" height="6" viewBox="0 0 6 6"><path d="M6 0v6H0z" fill="#404040"/></svg>
<div class="t" style="left:89px;top:238px;font-size:12px;color:#3a3a3a">4.3.2 资质要求</div>
<div class="t" style="left:105px;top:259px;font-size:12px;color:#3a3a3a">4.3.2.1 道路运输经营许可证</div>
<svg class="a" style="left:73px;top:283px" width="6" height="6" viewBox="0 0 6 6"><path d="M6 0v6H0z" fill="#404040"/></svg>
<div class="t" style="left:89px;top:280px;font-size:12px;color:#3a3a3a">4.3.3 关键岗位人员和队伍要求</div>
<svg class="a" style="left:89px;top:304px" width="6" height="6" viewBox="0 0 6 6"><path d="M6 0v6H0z" fill="#404040"/></svg>
<div class="t" style="left:105px;top:301px;font-size:12px;color:#3a3a3a">4.3.3.1 关键岗位人员</div>
<svg class="a" style="left:105px;top:325px" width="6" height="6" viewBox="0 0 6 6"><path d="M6 0v6H0z" fill="#404040"/></svg>
<div class="t" style="left:121px;top:322px;font-size:12px;color:#3a3a3a">4.3.3.1.1 企业负责人</div>
<div class="t" style="left:137px;top:343px;font-size:12px;color:#3a3a3a">4.3.3.1.1.1 身份证</div>
<div class="t" style="left:137px;top:364px;font-size:12px;color:#3a3a3a">4.3.3.1.1.2 资格证</div>
<div class="t" style="left:137px;top:385px;font-size:12px;color:#3a3a3a">4.3.3.1.1.3 社保证明</div>
<div class="t" style="left:121px;top:406px;font-size:12px;color:#3a3a3a">4.3.3.1.2 驾驶员</div>
<svg class="a" style="left:105px;top:430px" width="6" height="6" viewBox="0 0 6 6"><path d="M6 0v6H0z" fill="#404040"/></svg>
<div class="t" style="left:121px;top:427px;font-size:12px;color:#3a3a3a">4.3.3.1.3 安全负责人</div>
<div class="t" style="left:137px;top:448px;font-size:12px;color:#3a3a3a">4.3.3.1.3.1 身份证</div>
<div class="t" style="left:137px;top:469px;font-size:12px;color:#3a3a3a">4.3.3.1.3.2 资格证</div>
<div class="t" style="left:137px;top:490px;font-size:12px;color:#3a3a3a">4.3.3.1.3.3 社保证明</div>
<div class="a" style="left:100px;top:507px;width:224px;height:20px;background:#fde98a"></div>
<svg class="a" style="left:89px;top:514px" width="6" height="6" viewBox="0 0 6 6"><path d="M6 0v6H0z" fill="#404040"/></svg>
<div class="t" style="left:105px;top:511px;font-size:12px;color:#3a3a3a">4.3.3.2 HSE培训合格证书</div>
<div class="t" style="left:121px;top:532px;font-size:12px;color:#3a3a3a">4.3.3.2.1 关键岗位人员HSE培训承...</div>
<svg class="a" style="left:73px;top:556px" width="6" height="6" viewBox="0 0 6 6"><path d="M6 0v6H0z" fill="#404040"/></svg>
<div class="t" style="left:89px;top:553px;font-size:12px;color:#3a3a3a">4.3.4 主要设备要求</div>
<svg class="a" style="left:89px;top:577px" width="6" height="6" viewBox="0 0 6 6"><path d="M6 0v6H0z" fill="#404040"/></svg>
<div class="t" style="left:105px;top:574px;font-size:12px;color:#3a3a3a">4.3.4.1 辽LA1149、鲁HE3U2挂</div>
<svg class="a" style="left:105px;top:598px" width="6" height="6" viewBox="0 0 6 6"><path d="M6 0v6H0z" fill="#404040"/></svg>
<div class="t" style="left:121px;top:595px;font-size:12px;color:#3a3a3a">4.3.4.1.1 辽LA1149</div>
<div class="t" style="left:137px;top:616px;font-size:12px;color:#3a3a3a">4.3.4.1.1.1 行驶证</div>
<div class="t" style="left:137px;top:637px;font-size:12px;color:#3a3a3a">4.3.4.1.1.2 机动车登记证</div>
<svg class="a" style="left:105px;top:661px" width="6" height="6" viewBox="0 0 6 6"><path d="M6 0v6H0z" fill="#404040"/></svg>
<div class="t" style="left:121px;top:658px;font-size:12px;color:#3a3a3a">4.3.4.1.2 鲁HE3U2挂</div>
<div class="t" style="left:137px;top:679px;font-size:12px;color:#3a3a3a">4.3.4.1.2.1 行驶证</div>
<div class="a" style="left:133px;top:696px;width:191px;height:20px;background:#c5d9f1"></div>
<div class="t" style="left:137px;top:700px;font-size:12px;color:#3a3a3a">4.3.4.1.2.2 机动车登记证</div>
<div class="t" style="left:137px;top:721px;font-size:12px;color:#3a3a3a">4.3.4.1.2.3 租赁合同</div>
<svg class="a" style="left:89px;top:745px" width="6" height="6" viewBox="0 0 6 6"><path d="M6 0v6H0z" fill="#404040"/></svg>
<div class="t" style="left:105px;top:742px;font-size:12px;color:#3a3a3a">4.3.4.2 辽LA8481、辽GN152挂</div>
<svg class="a" style="left:105px;top:766px" width="6" height="6" viewBox="0 0 6 6"><path d="M6 0v6H0z" fill="#404040"/></svg>
<div class="t" style="left:121px;top:763px;font-size:12px;color:#3a3a3a">4.3.4.2.1 辽LA8481</div>
<div class="t" style="left:137px;top:784px;font-size:12px;color:#3a3a3a">4.3.4.2.1.1 行驶证</div>
<div class="t" style="left:137px;top:805px;font-size:12px;color:#3a3a3a">4.3.4.2.1.2 机动车登记证</div>
<svg class="a" style="left:105px;top:829px" width="6" height="6" viewBox="0 0 6 6"><path d="M6 0v6H0z" fill="#404040"/></svg>
<div class="t" style="left:121px;top:826px;font-size:12px;color:#3a3a3a">4.3.4.2.2 辽GN152挂</div>
</div>
<div id="doc">
<div class="a" style="left:0px;top:0px;width:29px;height:27px;background:#d9d9d9"></div>
<div class="a" style="left:4px;top:3px;width:20px;height:20px;background:#fafafa"></div>
<svg class="a" style="left:11px;top:12px" width="7" height="7" viewBox="0 0 7 7"><path d="M1 0v6h6" fill="none" stroke="#555" stroke-width="2"/></svg>
<div class="a" style="left:5px;top:30px;width:17px;height:731px;background:#fff"></div>
<div class="a" style="left:5px;top:761px;width:17px;height:89px;background:#c8c8c8"></div>
<div class="t" style="left:5.5px;top:34.4px;width:20px;height:10px;font-size:9.5px;line-height:10px;text-align:center;color:#3c3c3c;transform:rotate(-90deg)">6</div>
<div class="a" style="left:12px;top:49.1px;width:6px;height:1px;background:#3c3c3c"></div>
<div class="t" style="left:5.5px;top:71.6px;width:20px;height:10px;font-size:9.5px;line-height:10px;text-align:center;color:#3c3c3c;transform:rotate(-90deg)">8</div>
<div class="a" style="left:12px;top:67.3px;width:6px;height:1px;background:#3c3c3c"></div>
<div class="a" style="left:12px;top:86.3px;width:6px;height:1px;background:#3c3c3c"></div>
<div class="t" style="left:5.5px;top:108.8px;width:20px;height:10px;font-size:9.5px;line-height:10px;text-align:center;color:#3c3c3c;transform:rotate(-90deg)">10</div>
<div class="a" style="left:12px;top:104.5px;width:6px;height:1px;background:#3c3c3c"></div>
<div class="a" style="left:12px;top:123.5px;width:6px;height:1px;background:#3c3c3c"></div>
<div class="t" style="left:5.5px;top:146.0px;width:20px;height:10px;font-size:9.5px;line-height:10px;text-align:center;color:#3c3c3c;transform:rotate(-90deg)">12</div>
<div class="a" style="left:12px;top:141.7px;width:6px;height:1px;background:#3c3c3c"></div>
<div class="a" style="left:12px;top:160.7px;width:6px;height:1px;background:#3c3c3c"></div>
<div class="t" style="left:5.5px;top:183.2px;width:20px;height:10px;font-size:9.5px;line-height:10px;text-align:center;color:#3c3c3c;transform:rotate(-90deg)">14</div>
<div class="a" style="left:12px;top:178.9px;width:6px;height:1px;background:#3c3c3c"></div>
<div class="a" style="left:12px;top:197.9px;width:6px;height:1px;background:#3c3c3c"></div>
<div class="t" style="left:5.5px;top:220.4px;width:20px;height:10px;font-size:9.5px;line-height:10px;text-align:center;color:#3c3c3c;transform:rotate(-90deg)">16</div>
<div class="a" style="left:12px;top:216.1px;width:6px;height:1px;background:#3c3c3c"></div>
<div class="a" style="left:12px;top:235.1px;width:6px;height:1px;background:#3c3c3c"></div>
<div class="t" style="left:5.5px;top:257.6px;width:20px;height:10px;font-size:9.5px;line-height:10px;text-align:center;color:#3c3c3c;transform:rotate(-90deg)">18</div>
<div class="a" style="left:12px;top:253.3px;width:6px;height:1px;background:#3c3c3c"></div>
<div class="a" style="left:12px;top:272.3px;width:6px;height:1px;background:#3c3c3c"></div>
<div class="t" style="left:5.5px;top:294.8px;width:20px;height:10px;font-size:9.5px;line-height:10px;text-align:center;color:#3c3c3c;transform:rotate(-90deg)">20</div>
<div class="a" style="left:12px;top:290.5px;width:6px;height:1px;background:#3c3c3c"></div>
<div class="a" style="left:12px;top:309.5px;width:6px;height:1px;background:#3c3c3c"></div>
<div class="t" style="left:5.5px;top:332.0px;width:20px;height:10px;font-size:9.5px;line-height:10px;text-align:center;color:#3c3c3c;transform:rotate(-90deg)">22</div>
<div class="a" style="left:12px;top:327.7px;width:6px;height:1px;background:#3c3c3c"></div>
<div class="a" style="left:12px;top:346.7px;width:6px;height:1px;background:#3c3c3c"></div>
<div class="t" style="left:5.5px;top:369.2px;width:20px;height:10px;font-size:9.5px;line-height:10px;text-align:center;color:#3c3c3c;transform:rotate(-90deg)">24</div>
<div class="a" style="left:12px;top:364.9px;width:6px;height:1px;background:#3c3c3c"></div>
<div class="a" style="left:12px;top:383.9px;width:6px;height:1px;background:#3c3c3c"></div>
<div class="t" style="left:5.5px;top:406.4px;width:20px;height:10px;font-size:9.5px;line-height:10px;text-align:center;color:#3c3c3c;transform:rotate(-90deg)">26</div>
<div class="a" style="left:12px;top:402.1px;width:6px;height:1px;background:#3c3c3c"></div>
<div class="a" style="left:12px;top:421.1px;width:6px;height:1px;background:#3c3c3c"></div>
<div class="t" style="left:5.5px;top:443.6px;width:20px;height:10px;font-size:9.5px;line-height:10px;text-align:center;color:#3c3c3c;transform:rotate(-90deg)">28</div>
<div class="a" style="left:12px;top:439.3px;width:6px;height:1px;background:#3c3c3c"></div>
<div class="a" style="left:12px;top:458.3px;width:6px;height:1px;background:#3c3c3c"></div>
<div class="t" style="left:5.5px;top:480.8px;width:20px;height:10px;font-size:9.5px;line-height:10px;text-align:center;color:#3c3c3c;transform:rotate(-90deg)">30</div>
<div class="a" style="left:12px;top:476.5px;width:6px;height:1px;background:#3c3c3c"></div>
<div class="a" style="left:12px;top:495.5px;width:6px;height:1px;background:#3c3c3c"></div>
<div class="t" style="left:5.5px;top:518.0px;width:20px;height:10px;font-size:9.5px;line-height:10px;text-align:center;color:#3c3c3c;transform:rotate(-90deg)">32</div>
<div class="a" style="left:12px;top:513.7px;width:6px;height:1px;background:#3c3c3c"></div>
<div class="a" style="left:12px;top:532.7px;width:6px;height:1px;background:#3c3c3c"></div>
<div class="t" style="left:5.5px;top:555.2px;width:20px;height:10px;font-size:9.5px;line-height:10px;text-align:center;color:#3c3c3c;transform:rotate(-90deg)">34</div>
<div class="a" style="left:12px;top:550.9px;width:6px;height:1px;background:#3c3c3c"></div>
<div class="a" style="left:12px;top:569.9px;width:6px;height:1px;background:#3c3c3c"></div>
<div class="t" style="left:5.5px;top:592.4px;width:20px;height:10px;font-size:9.5px;line-height:10px;text-align:center;color:#3c3c3c;transform:rotate(-90deg)">36</div>
<div class="a" style="left:12px;top:588.1px;width:6px;height:1px;background:#3c3c3c"></div>
<div class="a" style="left:12px;top:607.1px;width:6px;height:1px;background:#3c3c3c"></div>
<div class="t" style="left:5.5px;top:629.6px;width:20px;height:10px;font-size:9.5px;line-height:10px;text-align:center;color:#3c3c3c;transform:rotate(-90deg)">38</div>
<div class="a" style="left:12px;top:625.3px;width:6px;height:1px;background:#3c3c3c"></div>
<div class="a" style="left:12px;top:644.3px;width:6px;height:1px;background:#3c3c3c"></div>
<div class="t" style="left:5.5px;top:666.8px;width:20px;height:10px;font-size:9.5px;line-height:10px;text-align:center;color:#3c3c3c;transform:rotate(-90deg)">40</div>
<div class="a" style="left:12px;top:662.5px;width:6px;height:1px;background:#3c3c3c"></div>
<div class="a" style="left:12px;top:681.5px;width:6px;height:1px;background:#3c3c3c"></div>
<div class="t" style="left:5.5px;top:704.0px;width:20px;height:10px;font-size:9.5px;line-height:10px;text-align:center;color:#3c3c3c;transform:rotate(-90deg)">42</div>
<div class="a" style="left:12px;top:699.7px;width:6px;height:1px;background:#3c3c3c"></div>
<div class="a" style="left:12px;top:718.7px;width:6px;height:1px;background:#3c3c3c"></div>
<div class="t" style="left:5.5px;top:741.2px;width:20px;height:10px;font-size:9.5px;line-height:10px;text-align:center;color:#3c3c3c;transform:rotate(-90deg)">44</div>
<div class="a" style="left:12px;top:736.9px;width:6px;height:1px;background:#3c3c3c"></div>
<div class="a" style="left:12px;top:755.9px;width:6px;height:1px;background:#3c3c3c"></div>
<div class="t" style="left:5.5px;top:778.4px;width:20px;height:10px;font-size:9.5px;line-height:10px;text-align:center;color:#3c3c3c;transform:rotate(-90deg)">46</div>
<div class="a" style="left:12px;top:774.1px;width:6px;height:1px;background:#3c3c3c"></div>
<div class="a" style="left:12px;top:793.1px;width:6px;height:1px;background:#3c3c3c"></div>
<div class="t" style="left:5.5px;top:815.6px;width:20px;height:10px;font-size:9.5px;line-height:10px;text-align:center;color:#3c3c3c;transform:rotate(-90deg)">48</div>
<div class="a" style="left:12px;top:811.3px;width:6px;height:1px;background:#3c3c3c"></div>
<div class="a" style="left:12px;top:830.3px;width:6px;height:1px;background:#3c3c3c"></div>
<div class="a" style="left:798px;top:5px;width:711px;height:16px;background:#c8c8c8"></div>
<div class="a" style="left:882px;top:5px;width:543px;height:16px;background:#fff"></div>
<div class="t" style="left:797.0px;top:9px;width:20px;text-align:center;font-size:9.5px;color:#3c3c3c">6</div>
<div class="t" style="left:822.0px;top:9px;width:20px;text-align:center;font-size:9.5px;color:#3c3c3c">4</div>
<div class="t" style="left:847.0px;top:9px;width:20px;text-align:center;font-size:9.5px;color:#3c3c3c">2</div>
<div class="t" style="left:897.0px;top:9px;width:20px;text-align:center;font-size:9.5px;color:#3c3c3c">2</div>
<div class="t" style="left:922.1px;top:9px;width:20px;text-align:center;font-size:9.5px;color:#3c3c3c">4</div>
<div class="t" style="left:947.2px;top:9px;width:20px;text-align:center;font-size:9.5px;color:#3c3c3c">6</div>
<div class="t" style="left:972.3px;top:9px;width:20px;text-align:center;font-size:9.5px;color:#3c3c3c">8</div>
<div class="t" style="left:997.4px;top:9px;width:20px;text-align:center;font-size:9.5px;color:#3c3c3c">10</div>
<div class="t" style="left:1022.5px;top:9px;width:20px;text-align:center;font-size:9.5px;color:#3c3c3c">12</div>
<div class="t" style="left:1047.6px;top:9px;width:20px;text-align:center;font-size:9.5px;color:#3c3c3c">14</div>
<div class="t" style="left:1072.7px;top:9px;width:20px;text-align:center;font-size:9.5px;color:#3c3c3c">16</div>
<div class="t" style="left:1097.8px;top:9px;width:20px;text-align:center;font-size:9.5px;color:#3c3c3c">18</div>
<div class="t" style="left:1122.9px;top:9px;width:20px;text-align:center;font-size:9.5px;color:#3c3c3c">20</div>
<div class="t" style="left:1148.0px;top:9px;width:20px;text-align:center;font-size:9.5px;color:#3c3c3c">22</div>
<div class="t" style="left:1173.1px;top:9px;width:20px;text-align:center;font-size:9.5px;color:#3c3c3c">24</div>
<div class="t" style="left:1198.2px;top:9px;width:20px;text-align:center;font-size:9.5px;color:#3c3c3c">26</div>
<div class="t" style="left:1223.3px;top:9px;width:20px;text-align:center;font-size:9.5px;color:#3c3c3c">28</div>
<div class="t" style="left:1248.4px;top:9px;width:20px;text-align:center;font-size:9.5px;color:#3c3c3c">30</div>
<div class="t" style="left:1273.5px;top:9px;width:20px;text-align:center;font-size:9.5px;color:#3c3c3c">32</div>
<div class="t" style="left:1298.6px;top:9px;width:20px;text-align:center;font-size:9.5px;color:#3c3c3c">34</div>
<div class="t" style="left:1323.7px;top:9px;width:20px;text-align:center;font-size:9.5px;color:#3c3c3c">36</div>
<div class="t" style="left:1348.8px;top:9px;width:20px;text-align:center;font-size:9.5px;color:#3c3c3c">38</div>
<div class="t" style="left:1373.9px;top:9px;width:20px;text-align:center;font-size:9.5px;color:#3c3c3c">40</div>
<div class="t" style="left:1399.0px;top:9px;width:20px;text-align:center;font-size:9.5px;color:#3c3c3c">42</div>
<div class="t" style="left:1424.5px;top:9px;width:20px;text-align:center;font-size:9.5px;color:#3c3c3c">44</div>
<div class="t" style="left:1449.5px;top:9px;width:20px;text-align:center;font-size:9.5px;color:#3c3c3c">46</div>
<div class="t" style="left:1474.5px;top:9px;width:20px;text-align:center;font-size:9.5px;color:#3c3c3c">48</div>
<svg class="a" style="left:876px;top:1.5px" width="13" height="30" viewBox="0 0 13 30"><path d="M1.5 1.5h10v3.5L6.5 10.5 1.5 5z" fill="#fff" stroke="#808080"/><path d="M6.5 13l5 4.5v4.5h-10v-4.5z" fill="#fff" stroke="#808080"/><path d="M1.5 22h10v6h-10z" fill="#fff" stroke="#808080"/></svg>
<svg class="a" style="left:1419px;top:13px" width="13" height="19" viewBox="0 0 13 19"><path d="M6.5 .5l5 5v5h-10v-5z" fill="#fff" stroke="#808080"/></svg>
</div>
<div class="page" id="p1" style="left:429px;top:187px;width:711px;height:818px;border-top:none">
<div class="a" style="left:87px;top:0;width:535px;height:694px;background:#f8f8f8;overflow:hidden"><div class="a" style="left:110px;top:100px;width:110px;height:90px;background:linear-gradient(135deg,rgba(0,0,0,0) 40%,rgba(232,232,232,.35) 40%,rgba(232,232,232,.35) 60%,rgba(0,0,0,0) 60%)"></div><div class="a" style="left:183px;top:163px;width:180px;height:100px;border-radius:80px 80px 0 0;opacity:.38;background:repeating-linear-gradient(90deg,rgba(205,190,150,.55) 0 4px,rgba(0,0,0,0) 4px 8.5px);-webkit-mask-image:repeating-linear-gradient(0deg,#000 0 2px,rgba(0,0,0,0) 2px 4.5px)"></div><div class="a" style="left:128px;top:253px;width:240px;height:110px;opacity:.34;background:repeating-linear-gradient(90deg,rgba(205,190,150,.55) 0 4px,rgba(0,0,0,0) 4px 8.5px);-webkit-mask-image:repeating-linear-gradient(0deg,#000 0 2px,rgba(0,0,0,0) 2px 4.5px)"></div><div class="a" style="left:123px;top:313px;width:260px;height:100px;opacity:.25;background:repeating-linear-gradient(90deg,rgba(205,190,150,.55) 0 4px,rgba(0,0,0,0) 4px 8.5px);-webkit-mask-image:repeating-linear-gradient(0deg,#000 0 2px,rgba(0,0,0,0) 2px 4.5px)"></div><div class="a" style="left:220px;top:268px;width:110px;height:20px;border-radius:50%;background:rgba(150,155,170,.35);filter:blur(4px)"></div><div class="a" style="left:103px;top:445px;width:40px;height:130px;opacity:.35;background:repeating-linear-gradient(90deg,rgba(220,120,120,.7) 0 2px,rgba(0,0,0,0) 2px 5px);clip-path:polygon(50% 0,100% 30%,100% 100%,0 100%,0 30%)"></div><div class="a" style="left:0;top:0;width:535px;height:694px;background:radial-gradient(ellipse at 60% 55%,rgba(238,238,238,.5),rgba(0,0,0,0) 60%)"></div></div>
<div class="t" style="left:90px;top:39px;font-size:10px;color:rgba(110,115,130,.4)">证书</div>
<div class="t" style="left:90px;top:136px;font-size:10px;color:rgba(110,115,130,.4)">证书</div>
<div class="t" style="left:91px;top:165px;font-size:10px;color:rgba(110,115,130,.4)">中</div>
<div class="t" style="left:89px;top:230px;font-size:10px;color:rgba(110,115,130,.4)">中证</div>
<div class="t" style="left:90px;top:423px;font-size:10px;color:rgba(110,115,130,.4)">证</div>
<div class="t" style="left:90px;top:455px;font-size:10px;color:rgba(110,115,130,.4)">巴</div>
<div class="t" style="left:89px;top:519px;font-size:10px;color:rgba(110,115,130,.4)">车登记</div>
<div class="t" style="left:90px;top:552px;font-size:10px;color:rgba(110,115,130,.4)">巴证</div>
<div class="t" style="left:91px;top:618px;font-size:10px;color:rgba(110,115,130,.4)">登记证书</div>
<div class="t" style="left:589px;top:22px;font-size:10px;color:rgba(110,115,130,.4)">工书</div>
<div class="t" style="left:592px;top:89px;font-size:10px;color:rgba(110,115,130,.4)">书</div>
<div class="t" style="left:595px;top:123px;font-size:10px;color:rgba(110,115,130,.4)">证书</div>
<div class="t" style="left:598px;top:186px;font-size:10px;color:rgba(110,115,130,.4)">证书</div>
<div class="t" style="left:600px;top:274px;font-size:10px;color:rgba(110,115,130,.4)">书</div>
<div class="t" style="left:595px;top:465px;font-size:10px;color:rgba(110,115,130,.4)">证书</div>
<div class="t" style="left:600px;top:501px;font-size:10px;color:rgba(110,115,130,.4)">证书</div>
<div class="a" style="left:87px;top:341px;width:4px;height:144px;background:repeating-linear-gradient(#1a1a1a 0 3px,#8a8a20 3px 5px,#222 5px 8px,#c8c860 8px 9px)"></div>
<div class="a" style="left:88px;top:485px;width:1px;height:37px;background:#333"></div>
<div class="a" style="left:115px;top:0;width:489px;height:263px;border:2px solid #2a2a2a;border-top:none"></div>
<div class="a" style="left:117px;top:5px;width:485px;height:1px;background:repeating-linear-gradient(90deg,#333 0 1.3px,rgba(0,0,0,0) 1.3px 2.6px)"></div>
<div class="a" style="left:117px;top:27px;width:485px;height:1px;background:repeating-linear-gradient(90deg,#333 0 1.3px,rgba(0,0,0,0) 1.3px 2.6px)"></div>
<div class="a" style="left:117px;top:50px;width:485px;height:1px;background:repeating-linear-gradient(90deg,#333 0 1.3px,rgba(0,0,0,0) 1.3px 2.6px)"></div>
<div class="a" style="left:117px;top:71px;width:485px;height:1px;background:repeating-linear-gradient(90deg,#333 0 1.3px,rgba(0,0,0,0) 1.3px 2.6px)"></div>
<div class="a" style="left:117px;top:93px;width:485px;height:1px;background:repeating-linear-gradient(90deg,#333 0 1.3px,rgba(0,0,0,0) 1.3px 2.6px)"></div>
<div class="a" style="left:117px;top:115px;width:485px;height:1px;background:repeating-linear-gradient(90deg,#333 0 1.3px,rgba(0,0,0,0) 1.3px 2.6px)"></div>
<div class="a" style="left:117px;top:136px;width:485px;height:1px;background:repeating-linear-gradient(90deg,#333 0 1.3px,rgba(0,0,0,0) 1.3px 2.6px)"></div>
<div class="a" style="left:117px;top:158px;width:485px;height:1px;background:repeating-linear-gradient(90deg,#333 0 1.3px,rgba(0,0,0,0) 1.3px 2.6px)"></div>
<div class="a" style="left:117px;top:180px;width:485px;height:1px;background:repeating-linear-gradient(90deg,#333 0 1.3px,rgba(0,0,0,0) 1.3px 2.6px)"></div>
<div class="a" style="left:117px;top:201px;width:485px;height:1px;background:repeating-linear-gradient(90deg,#333 0 1.3px,rgba(0,0,0,0) 1.3px 2.6px)"></div>
<div class="a" style="left:117px;top:222px;width:485px;height:1px;background:repeating-linear-gradient(90deg,#333 0 1.3px,rgba(0,0,0,0) 1.3px 2.6px)"></div>
<div class="a" style="left:117px;top:243px;width:485px;height:1px;background:repeating-linear-gradient(90deg,#333 0 1.3px,rgba(0,0,0,0) 1.3px 2.6px)"></div>
<div class="t" style="left:122px;top:12.0px;font-family:'Liberation Serif',serif;font-size:10px;font-weight:bold;color:#1e1e1e">4.</div>
<div class="t" style="left:122px;top:34.5px;font-family:'Liberation Serif',serif;font-size:10px;font-weight:bold;color:#1e1e1e">5.</div>
<div class="t" style="left:122px;top:56.0px;font-family:'Liberation Serif',serif;font-size:10px;font-weight:bold;color:#1e1e1e">6.</div>
<div class="t" style="left:122px;top:78.0px;font-family:'Liberation Serif',serif;font-size:10px;font-weight:bold;color:#1e1e1e">7.</div>
<div class="t" style="left:122px;top:99.7px;font-family:'Liberation Serif',serif;font-size:10px;font-weight:bold;color:#1e1e1e">8.</div>
<div class="t" style="left:122px;top:121.5px;font-family:'Liberation Serif',serif;font-size:10px;font-weight:bold;color:#1e1e1e">9.</div>
<div class="t" style="left:122px;top:142.0px;font-family:'Liberation Serif',serif;font-size:10px;font-weight:bold;color:#1e1e1e">10.</div>
<div class="t" style="left:122px;top:164.7px;font-family:'Liberation Serif',serif;font-size:10px;font-weight:bold;color:#1e1e1e">11.</div>
<div class="t" style="left:122px;top:185.0px;font-family:'Liberation Serif',serif;font-size:10px;font-weight:bold;color:#1e1e1e">12.</div>
<div class="t" style="left:122px;top:206.0px;font-family:'Liberation Serif',serif;font-size:10px;font-weight:bold;color:#1e1e1e">13.</div>
<div class="t" style="left:122px;top:227.0px;font-family:'Liberation Serif',serif;font-size:10px;font-weight:bold;color:#1e1e1e">14.</div>
<div class="t" style="left:122px;top:248.0px;font-family:'Liberation Serif',serif;font-size:10px;font-weight:bold;color:#1e1e1e">15.</div>
<div class="t" style="left:133px;top:8px;font-size:10.5px;font-weight:bold;color:#1e1e1e;letter-spacing:-.3px">抵押登记日期:<i>2021-01-29</i></div>
<div class="t" style="left:353px;top:53px;font-size:9.5px;font-weight:bold;color:#1e1e1e">解除抵押</div>
<div class="t" style="left:135px;top:76px;font-size:10.5px;font-weight:bold;color:#1e1e1e;letter-spacing:-.3px">解除抵押日期:<i>2025-07-07</i></div>
<div class="t" style="left:176px;top:227px;font-size:12px;color:rgba(120,140,190,.45)">机动车、</div>
<div class="t" style="left:522px;top:225px;font-size:12px;color:rgba(120,140,190,.45);transform:rotate(-8deg)">机动车登记证</div>
<div class="t" style="left:475px;top:246px;font-size:11px;color:rgba(120,140,190,.4)">登记证书</div>
<div class="t" style="left:344px;top:267px;font-family:'Liberation Serif',serif;font-size:10px;font-weight:bold;color:#222">第 3 页</div>
<div class="a" style="left:190px;top:285px;width:320px;height:4px;background:linear-gradient(90deg,rgba(190,190,200,0),rgba(170,175,190,.6),rgba(190,190,200,0))"></div>
<div class="t" style="left:333px;top:305px;font-size:11.5px;font-weight:bold;color:#1e1e1e;letter-spacing:4px">登记栏</div>
<div class="a" style="left:115px;top:320px;width:489px;height:335px;border:2px solid #1e1e1e"></div>
<div class="a" style="left:117px;top:342px;width:485px;height:1px;background:repeating-linear-gradient(90deg,#333 0 1.3px,rgba(0,0,0,0) 1.3px 2.6px)"></div>
<div class="a" style="left:117px;top:364px;width:485px;height:1px;background:repeating-linear-gradient(90deg,#333 0 1.3px,rgba(0,0,0,0) 1.3px 2.6px)"></div>
<div class="a" style="left:117px;top:386px;width:485px;height:1px;background:repeating-linear-gradient(90deg,#333 0 1.3px,rgba(0,0,0,0) 1.3px 2.6px)"></div>
<div class="a" style="left:117px;top:408px;width:485px;height:1px;background:repeating-linear-gradient(90deg,#333 0 1.3px,rgba(0,0,0,0) 1.3px 2.6px)"></div>
<div class="a" style="left:117px;top:429px;width:485px;height:1px;background:repeating-linear-gradient(90deg,#333 0 1.3px,rgba(0,0,0,0) 1.3px 2.6px)"></div>
<div class="a" style="left:117px;top:451px;width:485px;height:1px;background:repeating-linear-gradient(90deg,#333 0 1.3px,rgba(0,0,0,0) 1.3px 2.6px)"></div>
<div class="a" style="left:117px;top:473px;width:485px;height:1px;background:repeating-linear-gradient(90deg,#333 0 1.3px,rgba(0,0,0,0) 1.3px 2.6px)"></div>
<div class="a" style="left:117px;top:495px;width:485px;height:1px;background:repeating-linear-gradient(90deg,#333 0 1.3px,rgba(0,0,0,0) 1.3px 2.6px)"></div>
<div class="a" style="left:117px;top:517px;width:485px;height:1px;background:repeating-linear-gradient(90deg,#333 0 1.3px,rgba(0,0,0,0) 1.3px 2.6px)"></div>
<div class="a" style="left:117px;top:539px;width:485px;height:1px;background:repeating-linear-gradient(90deg,#333 0 1.3px,rgba(0,0,0,0) 1.3px 2.6px)"></div>
<div class="a" style="left:117px;top:560px;width:485px;height:1px;background:repeating-linear-gradient(90deg,#333 0 1.3px,rgba(0,0,0,0) 1.3px 2.6px)"></div>
<div class="a" style="left:117px;top:582px;width:485px;height:1px;background:repeating-linear-gradient(90deg,#333 0 1.3px,rgba(0,0,0,0) 1.3px 2.6px)"></div>
<div class="a" style="left:117px;top:604px;width:485px;height:1px;background:repeating-linear-gradient(90deg,#333 0 1.3px,rgba(0,0,0,0) 1.3px 2.6px)"></div>
<div class="a" style="left:117px;top:626px;width:485px;height:1px;background:repeating-linear-gradient(90deg,#333 0 1.3px,rgba(0,0,0,0) 1.3px 2.6px)"></div>
<div class="t" style="left:119px;top:328.0px;font-family:'Liberation Serif',serif;font-size:10px;font-weight:bold;color:#1e1e1e">16.</div>
<div class="t" style="left:119px;top:350.0px;font-family:'Liberation Serif',serif;font-size:10px;font-weight:bold;color:#1e1e1e">17.</div>
<div class="t" style="left:119px;top:371.9px;font-family:'Liberation Serif',serif;font-size:10px;font-weight:bold;color:#1e1e1e">18.</div>
<div class="t" style="left:119px;top:393.9px;font-family:'Liberation Serif',serif;font-size:10px;font-weight:bold;color:#1e1e1e">19.</div>
<div class="t" style="left:119px;top:415.8px;font-family:'Liberation Serif',serif;font-size:10px;font-weight:bold;color:#1e1e1e">20.</div>
<div class="t" style="left:119px;top:437.8px;font-family:'Liberation Serif',serif;font-size:10px;font-weight:bold;color:#1e1e1e">21.</div>
<div class="t" style="left:119px;top:459.7px;font-family:'Liberation Serif',serif;font-size:10px;font-weight:bold;color:#1e1e1e">22.</div>
<div class="t" style="left:119px;top:481.6px;font-family:'Liberation Serif',serif;font-size:10px;font-weight:bold;color:#1e1e1e">23.</div>
<div class="t" style="left:119px;top:503.6px;font-family:'Liberation Serif',serif;font-size:10px;font-weight:bold;color:#1e1e1e">24.</div>
<div class="t" style="left:119px;top:525.5px;font-family:'Liberation Serif',serif;font-size:10px;font-weight:bold;color:#1e1e1e">25.</div>
<div class="t" style="left:119px;top:547.5px;font-family:'Liberation Serif',serif;font-size:10px;font-weight:bold;color:#1e1e1e">26.</div>
<div class="t" style="left:119px;top:569.5px;font-family:'Liberation Serif',serif;font-size:10px;font-weight:bold;color:#1e1e1e">27.</div>
<div class="t" style="left:119px;top:591.4px;font-family:'Liberation Serif',serif;font-size:10px;font-weight:bold;color:#1e1e1e">28.</div>
<div class="t" style="left:119px;top:613.3px;font-family:'Liberation Serif',serif;font-size:10px;font-weight:bold;color:#1e1e1e">29.</div>
<div class="t" style="left:119px;top:635.7px;font-family:'Liberation Serif',serif;font-size:10px;font-weight:bold;color:#1e1e1e">30.</div>
<div class="t" style="left:344px;top:660px;font-family:'Liberation Serif',serif;font-size:10px;font-weight:bold;color:#222">第 4 页</div>
<div class="t" style="left:622px;top:683px;font-size:10px;color:#7a7a7a">↵</div>
<div class="a" style="left:63px;top:733px;width:21px;height:21px;border-top:1px solid #a0a0a0;border-right:1px solid #a0a0a0"></div>
<div class="a" style="left:625px;top:733px;width:21px;height:21px;border-top:1px solid #a0a0a0;border-left:1px solid #a0a0a0"></div>
<div class="t" style="left:347px;top:748px;font-size:10px;color:#666">605<span style="font-size:9px;color:#999">↵</span></div>
</div>
<div class="page" id="p2" style="left:1155px;top:187px;width:711px;height:818px;border-top:none;border-left:none;overflow:hidden">
<div class="a" style="left:0;top:0;width:1px;height:818px;background:#c8c8c8"></div>
<div class="a" style="left:85px;top:0;width:268px;height:142px;background:#fbfbfb;border-left:1px solid #d8d8d8;border-radius:0 0 10px 10px;border-bottom:3px solid #2a2a2a"></div>
<div class="t" style="left:97.0px;top:0.0px;font-size:6px;color:#888;">Plate No</div>
<div class="t" style="left:190.0px;top:0.0px;font-size:6px;color:#999;">Vehicle Type</div>
<div class="t" style="left:97.0px;top:12.0px;font-size:8px;color:#666;">所 有 人</div>
<div class="t" style="left:97.0px;top:20.0px;font-size:6px;color:#666;">Owner</div>
<div class="t" style="left:134.0px;top:11.5px;font-size:11px;color:#222;font-weight:bold;letter-spacing:1px">粱山鲁翔运输有限公司</div>
<div class="a" style="left:131.0px;top:26.7px;width:213.0px;height:1.2px;background:repeating-linear-gradient(90deg,#777 0 1.3px,rgba(0,0,0,0) 1.3px 2.6px)"></div>
<div class="t" style="left:97.0px;top:33.0px;font-size:8px;color:#666;">住　　址</div>
<div class="t" style="left:97.0px;top:41.0px;font-size:6px;color:#666;">Address</div>
<div class="t" style="left:133.0px;top:33.0px;font-size:11px;color:#222;font-weight:bold;letter-spacing:.6px">济宁市粱山县拳铺镇蔡林南村</div>
<div class="a" style="left:131.0px;top:47.4px;width:213.0px;height:1.2px;background:repeating-linear-gradient(90deg,#777 0 1.3px,rgba(0,0,0,0) 1.3px 2.6px)"></div>
<div class="t" style="left:97.0px;top:54.0px;font-size:8px;color:#555;">使用性质</div>
<div class="t" style="left:97.0px;top:62.0px;font-size:6px;color:#777;">Use Character</div>
<div class="t" style="left:134.0px;top:54.0px;font-size:11px;color:#222;font-weight:bold">货运</div>
<div class="t" style="left:186.0px;top:54.0px;font-size:8px;color:#555;">品牌型号</div>
<div class="t" style="left:187.0px;top:62.0px;font-size:6px;color:#666;">Model</div>
<div class="t" style="left:226.0px;top:54.5px;font-size:11px;color:#222;font-weight:bold;letter-spacing:.3px">新马牌<i>YYY9400Z</i></div>
<div class="a" style="left:131.0px;top:68.0px;width:213.0px;height:1.2px;background:repeating-linear-gradient(90deg,#777 0 1.3px,rgba(0,0,0,0) 1.3px 2.6px)"></div>
<div class="a" style="left:97px;top:72px;width:60px;height:60px;border:1px solid #c98a90"></div>
<div class="t" style="left:101.0px;top:75.0px;font-size:10.5px;color:#d26a76;">山东省济宁</div>
<div class="t" style="left:101.0px;top:95.0px;font-size:10.5px;color:#d26a76;">市公安局交</div>
<div class="t" style="left:101.0px;top:114.0px;font-size:10.5px;color:#d26a76;">通警察支队</div>
<div class="t" style="left:160.0px;top:75.0px;font-size:7.5px;color:#555;">车辆识别代号</div>
<div class="t" style="left:161.0px;top:84.0px;font-size:6px;color:#666;">VIN</div>
<div class="t" style="left:217.0px;top:76.0px;font-size:10.5px;color:#333;font-weight:bold;letter-spacing:.8px"><i>LA9B40Z34KIYYY901</i></div>
<div class="a" style="left:208.0px;top:89.6px;width:136.0px;height:1.2px;background:repeating-linear-gradient(90deg,#777 0 1.3px,rgba(0,0,0,0) 1.3px 2.6px)"></div>
<div class="t" style="left:160.0px;top:96.0px;font-size:7.5px;color:#555;">发动机号码</div>
<div class="t" style="left:161.0px;top:105.0px;font-size:6px;color:#777;">Engine No</div>
<div class="t" style="left:210.0px;top:97.0px;font-size:10px;color:#333;font-weight:bold">无</div>
<div class="a" style="left:199.0px;top:110.3px;width:142.0px;height:1.2px;background:repeating-linear-gradient(90deg,#777 0 1.3px,rgba(0,0,0,0) 1.3px 2.6px)"></div>
<div class="t" style="left:160.0px;top:116.0px;font-size:7.5px;color:#555;">注册日期</div>
<div class="t" style="left:161.0px;top:125.0px;font-size:6px;color:#777;">Reg Date</div>
<div class="t" style="left:193.0px;top:116.0px;font-size:11px;color:#222;font-weight:bold;letter-spacing:.8px"><i>2019-11-21</i></div>
<div class="t" style="left:256.0px;top:116.0px;font-size:7.5px;color:#555;">发证日期</div>
<div class="t" style="left:256.0px;top:125.0px;font-size:6px;color:#777;">Issue Date</div>
<div class="t" style="left:286.0px;top:116.5px;font-size:11px;color:#222;font-weight:bold;letter-spacing:.6px"><i>2019-11-21</i></div>
<div class="a" style="left:110px;top:5px;width:3px;height:8px;background:#3aa6b9;opacity:.8"></div>
<div class="a" style="left:110px;top:40px;width:3px;height:8px;background:#3aa6b9;opacity:.8"></div>
<div class="a" style="left:110px;top:75px;width:3px;height:8px;background:#3aa6b9;opacity:.8"></div>
<div class="a" style="left:110px;top:105px;width:3px;height:8px;background:#3aa6b9;opacity:.8"></div>
<div class="a" style="left:110px;top:129px;width:3px;height:8px;background:#3aa6b9;opacity:.8"></div>
<div class="a" style="left:353px;top:0;width:271px;height:142px;background:#fbfbfb;border-right:1px solid #ddd;border-radius:0 0 10px 10px;border-bottom:3px solid #2a2a2a"></div>
<div class="a" style="left:367.0px;top:21.0px;width:250.0px;height:1.2px;background:repeating-linear-gradient(90deg,#999 0 1.3px,rgba(0,0,0,0) 1.3px 2.6px)"></div>
<div class="a" style="left:367.0px;top:47.5px;width:250.0px;height:1.2px;background:repeating-linear-gradient(90deg,#999 0 1.3px,rgba(0,0,0,0) 1.3px 2.6px)"></div>
<div class="a" style="left:367.0px;top:73.0px;width:250.0px;height:1.2px;background:repeating-linear-gradient(90deg,#999 0 1.3px,rgba(0,0,0,0) 1.3px 2.6px)"></div>
<div class="a" style="left:367.0px;top:99.0px;width:250.0px;height:1.2px;background:repeating-linear-gradient(90deg,#999 0 1.3px,rgba(0,0,0,0) 1.3px 2.6px)"></div>
<div class="a" style="left:367.0px;top:124.0px;width:250.0px;height:1.2px;background:repeating-linear-gradient(90deg,#999 0 1.3px,rgba(0,0,0,0) 1.3px 2.6px)"></div>
<div class="a" style="left:390px;top:0.7px;width:210px;height:16px;border:1.5px solid #1e1e1e;transform:rotate(0deg);background:#fdfdfd"></div>
<div class="t" style="left:396.0px;top:2.7px;font-size:11px;color:#1e1e1e;font-weight:bold;letter-spacing:-.2px;transform-origin:0 50%;transform:scaleX(.84)">鲁 <i>HE3U2</i>挂 检验有效期至 <i>2022</i> 年 <i>11</i> 月辽 J</div>
<div class="a" style="left:395px;top:19.0px;width:206px;height:21px;border:1.5px solid #1e1e1e;transform:rotate(-1.5deg);background:#fdfdfd"></div>
<div class="t" style="left:401.0px;top:23.5px;font-size:11px;color:#1e1e1e;font-weight:bold;letter-spacing:-.2px;transform-origin:0 50%;transform:rotate(-1.5deg) scaleX(.84)">鲁 <i>HE3U2</i>挂 检验有效期至 <i>2023</i> 年 <i>11</i> 月辽 J</div>
<div class="a" style="left:383px;top:49.0px;width:206px;height:17px;border:1.5px solid #1e1e1e;transform:rotate(0deg);background:#fdfdfd"></div>
<div class="t" style="left:389.0px;top:51.5px;font-size:11px;color:#1e1e1e;font-weight:bold;letter-spacing:-.2px;transform-origin:0 50%;transform:scaleX(.84)">鲁 <i>HE3U2</i>挂 检验有效期至 <i>2026</i> 年 <i>11</i> 月辽 J</div>
<div class="a" style="left:393px;top:71.0px;width:208px;height:16px;border:1.5px solid #1e1e1e;transform:rotate(0deg);background:#fdfdfd"></div>
<div class="t" style="left:399.0px;top:73.0px;font-size:11px;color:#1e1e1e;font-weight:bold;letter-spacing:-.2px;transform-origin:0 50%;transform:scaleX(.84)">鲁 <i>HE3U2</i>挂 检验有效期至 <i>2024</i> 年 <i>11</i> 月蒙 G</div>
<div class="a" style="left:381px;top:45px;width:213px;height:24px;border:2.5px solid #d11b24"></div>
<svg class="a" style="left:85px;top:150px;filter:blur(.7px)" width="267" height="183" viewBox="0 0 267 183">
<defs><clipPath id="ph"><rect x="8" y="8" width="245" height="166" rx="10"/></clipPath>
<linearGradient id="gnd" x1="0" y1="0" x2="0" y2="1"><stop offset="0" stop-color="#b9c4be"/><stop offset="1" stop-color="#94a39a"/></linearGradient>
<linearGradient id="red" x1="0" y1="0" x2="0" y2="1"><stop offset="0" stop-color="#c95953"/><stop offset="1" stop-color="#b0403d"/></linearGradient></defs>
<rect x="0" y="0" width="267" height="183" fill="#6a625c"/>
<rect x="3" y="3" width="261" height="177" rx="12" fill="#8a8784"/>
<rect x="5.5" y="5.5" width="250" height="171" rx="11" fill="#c9cdcc"/>
<g clip-path="url(#ph)">
<rect x="0" y="0" width="267" height="183" fill="#dfe3e3"/>
<polygon points="8.2,4.5 252.5,0.7 252.5,16.0 181.6,29.4 8.2,28.4" fill="#6ea6ae"/>
<polygon points="112.6,6.4 252.5,0.7 252.5,14.1 183.5,30.4" fill="#5f98a1"/>
<rect x="14.9" y="10" width="2.5" height="90.3" fill="#73898c"/>
<rect x="106.9" y="10" width="3.5" height="36.6" fill="#6b9ea6"/>
<rect x="181.6" y="27.5" width="5" height="12.2" fill="#6b9ea6"/>
<rect x="230.4" y="10" width="9" height="80.7" fill="#5a979f"/>
<rect x="8.2" y="54.3" width="39.3" height="19.2" fill="#c9a49a"/>
<rect x="8.2" y="73.5" width="37.4" height="14.4" fill="#2c9bd7"/>
<rect x="239.0" y="63.9" width="18.2" height="28.7" fill="#86a398"/>
<rect x="0" y="88.8" width="267" height="100" fill="url(#gnd)"/>
<polygon points="36.0,100.3 42.7,100.3 80.0,173.1 72.4,173.1" fill="#dfe5e1"/>

<ellipse cx="116.4" cy="155.8" rx="36.4" ry="12.5" fill="#55615b" opacity=".85"/>
<ellipse cx="172.0" cy="138.6" rx="19.2" ry="6.7" fill="#55615b" opacity=".8"/>
<polygon points="31.2,77.3 40.8,77.3 38.9,97.4 32.1,97.4" fill="#2c3540"/>
<polygon points="48.4,53.3 122.2,44.7 122.2,86.9 47.5,83.0" fill="#684848"/>
<polygon points="51.3,56.2 122.2,48.6 122.2,73.5 50.3,73.5" fill="#8a6c68"/>
<rect x="120.3" y="44.3" width="110.2" height="39.3" fill="url(#red)"/>
<rect x="120.3" y="44.3" width="110.2" height="3" fill="#d8cfcc"/>
<polygon points="101.1,83.0 204.6,83.0 200.7,127.1 103.0,127.1" fill="#a53c3a"/><rect x="128" y="90" width="36" height="8" fill="#2a2222"/><rect x="130" y="106" width="14" height="18" fill="#2a2222"/>
<rect x="103.0" y="92.6" width="24.9" height="32.6" fill="#c04844"/>
<rect x="154.8" y="96.4" width="44.1" height="23.0" fill="#c04844"/>
<rect x="127.9" y="96.4" width="21.1" height="6.7" fill="#e8b070"/>
<polygon points="124.1,125.2 221.8,115.6 221.8,123.3 124.1,132.8" fill="#d9dedb"/>
<polygon points="137.5,123.3 160.5,121.7 160.5,129.4 137.5,130.9" fill="#f0a030"/>
<polygon points="195.0,117.5 214.1,116.0 214.1,122.5 195.0,124.0" fill="#f0a030"/>
<ellipse cx="53.2" cy="91.7" rx="6" ry="12" fill="#3c3c3c"/>
<ellipse cx="79.1" cy="107.9" rx="6" ry="17" fill="#2e2e2e"/>
<ellipse cx="85.8" cy="112.7" rx="7" ry="19" fill="#292929"/>
<ellipse cx="94.4" cy="117.5" rx="8" ry="21" fill="#242424"/>
<ellipse cx="93.4" cy="117.5" rx="4" ry="12" fill="#8f9290"/>
<polygon points="205.5,139.6 215.1,158.7 197.9,158.7" fill="none" stroke="#cc4444" stroke-width="2"/>
<rect x="241.0" y="104.1" width="4" height="23.0" fill="#c9cecb"/>
</g>
</svg>
<div class="a" style="left:353px;top:151px;width:265px;height:182px;background:#fcfcfc;border-left:2px solid #3a3a3a;border-top:1px solid #aaa;border-radius:0 8px 0 0"></div>
<div class="a" style="left:610px;top:151px;width:8px;height:12px;background:#d23030;border-radius:0 6px 0 0"></div>
<div class="t" style="left:364.0px;top:165.0px;font-size:6.5px;color:#555;">号牌号码</div>
<div class="t" style="left:400.5px;top:157.5px;font-size:11px;color:#333;font-weight:bold;letter-spacing:.5px">鲁<i>HE3U2</i>挂</div>
<div class="a" style="left:396px;top:171px;width:72px;height:1px;background:#666"></div>
<div class="t" style="left:473.0px;top:165.0px;font-size:6.5px;color:#555;">档案编号</div>
<div class="t" style="left:514.5px;top:158.0px;font-size:11px;color:#333;font-weight:bold;letter-spacing:.3px"><i>370824009898</i></div>
<div class="a" style="left:502.0px;top:171.5px;width:107.0px;height:1.2px;background:repeating-linear-gradient(90deg,#777 0 1.3px,rgba(0,0,0,0) 1.3px 2.6px)"></div>
<div class="t" style="left:364.0px;top:184.0px;font-size:6.5px;color:#555;">核定载人数</div>
<div class="t" style="left:399.0px;top:181.0px;font-size:9px;color:#444;">--</div>
<div class="t" style="left:514.0px;top:186.0px;font-size:7px;color:#555;letter-spacing:2px">总 质 量</div>
<div class="t" style="left:559.0px;top:181.0px;font-size:11px;color:#333;font-weight:bold"><i>40000kg</i></div>
<div class="a" style="left:397.0px;top:193.0px;width:212.0px;height:1.2px;background:repeating-linear-gradient(90deg,#777 0 1.3px,rgba(0,0,0,0) 1.3px 2.6px)"></div>
<div class="t" style="left:364.0px;top:205.0px;font-size:6.5px;color:#555;">整备质量</div>
<div class="t" style="left:400.0px;top:201.0px;font-size:11px;color:#333;font-weight:bold"><i>7600kg</i></div>
<div class="t" style="left:514.0px;top:206.0px;font-size:6.5px;color:#555;">核定载质量</div>
<div class="t" style="left:560.0px;top:202.0px;font-size:11px;color:#333;font-weight:bold"><i>33000kg</i></div>
<div class="a" style="left:397.0px;top:214.0px;width:212.0px;height:1.2px;background:repeating-linear-gradient(90deg,#777 0 1.3px,rgba(0,0,0,0) 1.3px 2.6px)"></div>
<div class="t" style="left:364.0px;top:226.0px;font-size:6.5px;color:#555;">外廓尺寸</div>
<div class="t" style="left:400.0px;top:223.5px;font-size:10.5px;color:#333;font-weight:bold;letter-spacing:-.3px"><i>13000×2550×2900mm</i></div>
<div class="t" style="left:514.0px;top:227.0px;font-size:6px;color:#555;">准牵引总质量</div>
<div class="t" style="left:559.0px;top:223.0px;font-size:9px;color:#444;">--</div>
<div class="a" style="left:397.0px;top:234.0px;width:212.0px;height:1.2px;background:repeating-linear-gradient(90deg,#777 0 1.3px,rgba(0,0,0,0) 1.3px 2.6px)"></div>
<div class="t" style="left:407.0px;top:237.5px;font-size:11px;color:#222;font-weight:bold;letter-spacing:.3px">强制报废期止：<i>2034-11-21</i></div>
<div class="t" style="left:364.0px;top:249.0px;font-size:6.5px;color:#555;">备　注</div>
<div class="a" style="left:397.0px;top:254.0px;width:212.0px;height:1.2px;background:repeating-linear-gradient(90deg,#777 0 1.3px,rgba(0,0,0,0) 1.3px 2.6px)"></div>
<div class="a" style="left:397.0px;top:274.0px;width:212.0px;height:1.2px;background:repeating-linear-gradient(90deg,#777 0 1.3px,rgba(0,0,0,0) 1.3px 2.6px)"></div>
<div class="a" style="left:403px;top:270px;width:185px;height:19px;border:1.5px solid #222;background:#fcfcfc"></div>
<div class="t" style="left:408.0px;top:273.0px;font-size:11px;color:#222;font-weight:bold;letter-spacing:.2px">检验有效期至<i>2026</i> 年<i>11</i> 月鲁<i>H(37)</i></div>
<div class="a" style="left:397.0px;top:297.0px;width:212.0px;height:1.2px;background:repeating-linear-gradient(90deg,#777 0 1.3px,rgba(0,0,0,0) 1.3px 2.6px)"></div>
<div class="t" style="left:365.0px;top:290.0px;font-size:6.5px;color:#555;">检验记录</div>
<div class="t" style="left:400.0px;top:299.0px;font-size:10px;color:#333;">无</div>
<div class="a" style="left:467px;top:300px;width:138px;height:16px;overflow:hidden"><div class="a" style="left:0.0px;top:0;width:1px;height:16px;background:#222"></div><div class="a" style="left:2.2px;top:0;width:1.5px;height:16px;background:#222"></div><div class="a" style="left:6.2px;top:0;width:2.5px;height:16px;background:#222"></div><div class="a" style="left:9.7px;top:0;width:2.5px;height:16px;background:#222"></div><div class="a" style="left:13.2px;top:0;width:2px;height:16px;background:#222"></div><div class="a" style="left:17.2px;top:0;width:2.5px;height:16px;background:#222"></div><div class="a" style="left:20.9px;top:0;width:1px;height:16px;background:#222"></div><div class="a" style="left:24.4px;top:0;width:2.5px;height:16px;background:#222"></div><div class="a" style="left:29.4px;top:0;width:2px;height:16px;background:#222"></div><div class="a" style="left:32.6px;top:0;width:1px;height:16px;background:#222"></div><div class="a" style="left:34.8px;top:0;width:2.5px;height:16px;background:#222"></div><div class="a" style="left:39.8px;top:0;width:1px;height:16px;background:#222"></div><div class="a" style="left:41.8px;top:0;width:1px;height:16px;background:#222"></div><div class="a" style="left:43.8px;top:0;width:1.5px;height:16px;background:#222"></div><div class="a" style="left:46.3px;top:0;width:1.5px;height:16px;background:#222"></div><div class="a" style="left:50.3px;top:0;width:2.5px;height:16px;background:#222"></div><div class="a" style="left:55.3px;top:0;width:2px;height:16px;background:#222"></div><div class="a" style="left:59.8px;top:0;width:2.5px;height:16px;background:#222"></div><div class="a" style="left:64.8px;top:0;width:1px;height:16px;background:#222"></div><div class="a" style="left:67.8px;top:0;width:1px;height:16px;background:#222"></div><div class="a" style="left:69.8px;top:0;width:1px;height:16px;background:#222"></div><div class="a" style="left:73.3px;top:0;width:1px;height:16px;background:#222"></div><div class="a" style="left:76.3px;top:0;width:2px;height:16px;background:#222"></div><div class="a" style="left:80.3px;top:0;width:2px;height:16px;background:#222"></div><div class="a" style="left:84.8px;top:0;width:2.5px;height:16px;background:#222"></div><div class="a" style="left:89.3px;top:0;width:2.5px;height:16px;background:#222"></div><div class="a" style="left:94.3px;top:0;width:2.5px;height:16px;background:#222"></div><div class="a" style="left:98.0px;top:0;width:1.5px;height:16px;background:#222"></div><div class="a" style="left:100.5px;top:0;width:1.5px;height:16px;background:#222"></div><div class="a" style="left:103.2px;top:0;width:1.5px;height:16px;background:#222"></div><div class="a" style="left:105.7px;top:0;width:1px;height:16px;background:#222"></div><div class="a" style="left:108.7px;top:0;width:1.5px;height:16px;background:#222"></div><div class="a" style="left:111.2px;top:0;width:1px;height:16px;background:#222"></div><div class="a" style="left:114.7px;top:0;width:2px;height:16px;background:#222"></div><div class="a" style="left:117.7px;top:0;width:1.5px;height:16px;background:#222"></div><div class="a" style="left:120.2px;top:0;width:2px;height:16px;background:#222"></div><div class="a" style="left:123.4px;top:0;width:1px;height:16px;background:#222"></div><div class="a" style="left:126.4px;top:0;width:2px;height:16px;background:#222"></div><div class="a" style="left:130.9px;top:0;width:1px;height:16px;background:#222"></div><div class="a" style="left:132.9px;top:0;width:2.5px;height:16px;background:#222"></div><div class="a" style="left:136.4px;top:0;width:2px;height:16px;background:#222"></div></div>
<div class="t" style="left:471.0px;top:318.0px;font-size:7px;color:#333;letter-spacing:2.6px">•3 7 0 0 0 4 7 1 0 2 8 8 7•</div>
<div class="a" style="left:377px;top:153px;width:3px;height:10px;background:#3aa6b9;opacity:.75"></div>
<div class="a" style="left:377px;top:183px;width:3px;height:10px;background:#3aa6b9;opacity:.75"></div>
<div class="a" style="left:377px;top:223px;width:3px;height:10px;background:#3aa6b9;opacity:.75"></div>
<div class="a" style="left:377px;top:253px;width:3px;height:10px;background:#3aa6b9;opacity:.75"></div>
<div class="a" style="left:377px;top:283px;width:3px;height:10px;background:#3aa6b9;opacity:.75"></div>
<div class="a" style="left:377px;top:313px;width:3px;height:10px;background:#3aa6b9;opacity:.75"></div>
<div class="t" style="left:618.0px;top:328.0px;font-size:9px;color:#888;">↵</div>
<div class="a" style="left:77px;top:353px;width:4px;height:4px;background:#111"></div>
<div class="t" style="left:85.0px;top:345.5px;font-size:13.5px;color:#111;font-family:'Liberation Serif',serif;font-weight:bold;letter-spacing:.2px">4.&nbsp;3.&nbsp;4.&nbsp;1.&nbsp;2.&nbsp;2</div>
<div class="t" style="left:184.5px;top:344.5px;font-size:14px;color:#111;font-weight:bold">机动车登记证</div>
<div class="t" style="left:270.0px;top:345.0px;font-size:11px;color:#aaa;">↵</div>
<div class="t" style="left:85.0px;top:371.0px;font-size:10px;color:#999;">↵</div>
<div class="a" style="left:54px;top:389px;width:541px;height:288px;border:4px solid #c8102e"></div>
<div class="a" style="left:64px;top:733px;width:21px;height:21px;border-top:1px solid #a0a0a0;border-right:1px solid #a0a0a0"></div>
<div class="a" style="left:625px;top:733px;width:21px;height:21px;border-top:1px solid #a0a0a0;border-left:1px solid #a0a0a0"></div>
<div class="t" style="left:347.5px;top:748.0px;font-size:10px;color:#666;">606<span style="font-size:9px;color:#999">↵</span></div>
</div>
<div id="status">
<div class="t" style="left:17.5px;top:5px;font-size:12px;color:#444;letter-spacing:.4px">第 606 页，共 775 页</div>
<div class="t" style="left:154.5px;top:5px;font-size:12px;color:#444;letter-spacing:.35px">210740 个字</div>
<svg class="a" style="left:243px;top:4px" width="16" height="13" viewBox="0 0 16 13"><path d="M1 1.5h5l1.5 1.5v9.5L6 11H1z" fill="none" stroke="#555" stroke-width="1"/><path d="M9 4l5 5M14 4l-5 5" stroke="#555" stroke-width="1"/></svg>
<div class="t" style="left:275.5px;top:5px;font-size:12px;color:#444;">简体中文(中国大陆)</div>
<div class="t" style="left:397.5px;top:5px;font-size:12px;color:#444;">修订: 关闭</div>
<svg class="a" style="left:471px;top:3px" width="17" height="16" viewBox="0 0 17 16"><path d="M5 3.5A6 6 0 0 0 7.5 14" fill="none" stroke="#555" stroke-width="1.1" stroke-dasharray="2 1.3"/><path d="M7 1v6h4" fill="none" stroke="#555" stroke-width="1.1"/><path d="M9 8l7 7M16 8l-7 7" stroke="#444" stroke-width="1.6"/></svg>
<div class="t" style="left:491px;top:5px;font-size:12px;color:#444;font-weight:bold;color:#333">辅助功能: 调查</div>
<svg class="a" style="left:1633px;top:4px" width="15" height="14" viewBox="0 0 15 14"><path d="M.5 1.5h6l1 1 1-1h6v10h-6l-1 1-1-1h-6z" fill="none" stroke="#555"/><path d="M7.5 2.5v10M2 4h4M2 6h4M2 8h4M9 4h4M9 6h4M9 8h4" stroke="#555" stroke-width=".8"/></svg>
<div class="a" style="left:1660px;top:0;width:40px;height:21px;background:#c8c8c8"></div>
<svg class="a" style="left:1674px;top:4px" width="15" height="14" viewBox="0 0 15 14"><rect x=".5" y=".5" width="14" height="13" fill="none" stroke="#555"/><path d="M3 3.5h9M3 5.5h9M3 7.5h9M3 9.5h9M3 11.5h9" stroke="#555" stroke-width=".9"/></svg>
<svg class="a" style="left:1713px;top:4px" width="15" height="14" viewBox="0 0 15 14"><path d="M.5 .5h11v6M.5 .5v12h6" fill="none" stroke="#555"/><path d="M2.5 3h7M2.5 5h7M2.5 7h4M2.5 9h4" stroke="#555" stroke-width=".9"/><circle cx="10.5" cy="10" r="3.3" fill="none" stroke="#555"/><path d="M8 9.5h5M10.5 7v6" stroke="#555" stroke-width=".7"/></svg>
<div class="a" style="left:1747px;top:10px;width:8px;height:1.3px;background:#444"></div>
<div class="a" style="left:1761px;top:10px;width:99px;height:1px;background:#666"></div>
<div class="a" style="left:1802px;top:5px;width:6px;height:11px;background:#555"></div>
<div class="a" style="left:1810px;top:7px;width:1px;height:7px;background:#555"></div>
<div class="a" style="left:1864px;top:10px;width:8px;height:1.3px;background:#444"></div>
<div class="a" style="left:1867.4px;top:6.5px;width:1.3px;height:8px;background:#444"></div>
<div class="t" style="left:1886px;top:5px;font-size:12px;color:#444;">90%</div>
</div>
<div id="task"><div class="a" style="left:350px;top:0;width:48px;height:6px;background:#bf6a25"></div><div class="a" style="left:889px;top:0;width:48px;height:6px;background:#525c60"></div></div>
</body></html>
